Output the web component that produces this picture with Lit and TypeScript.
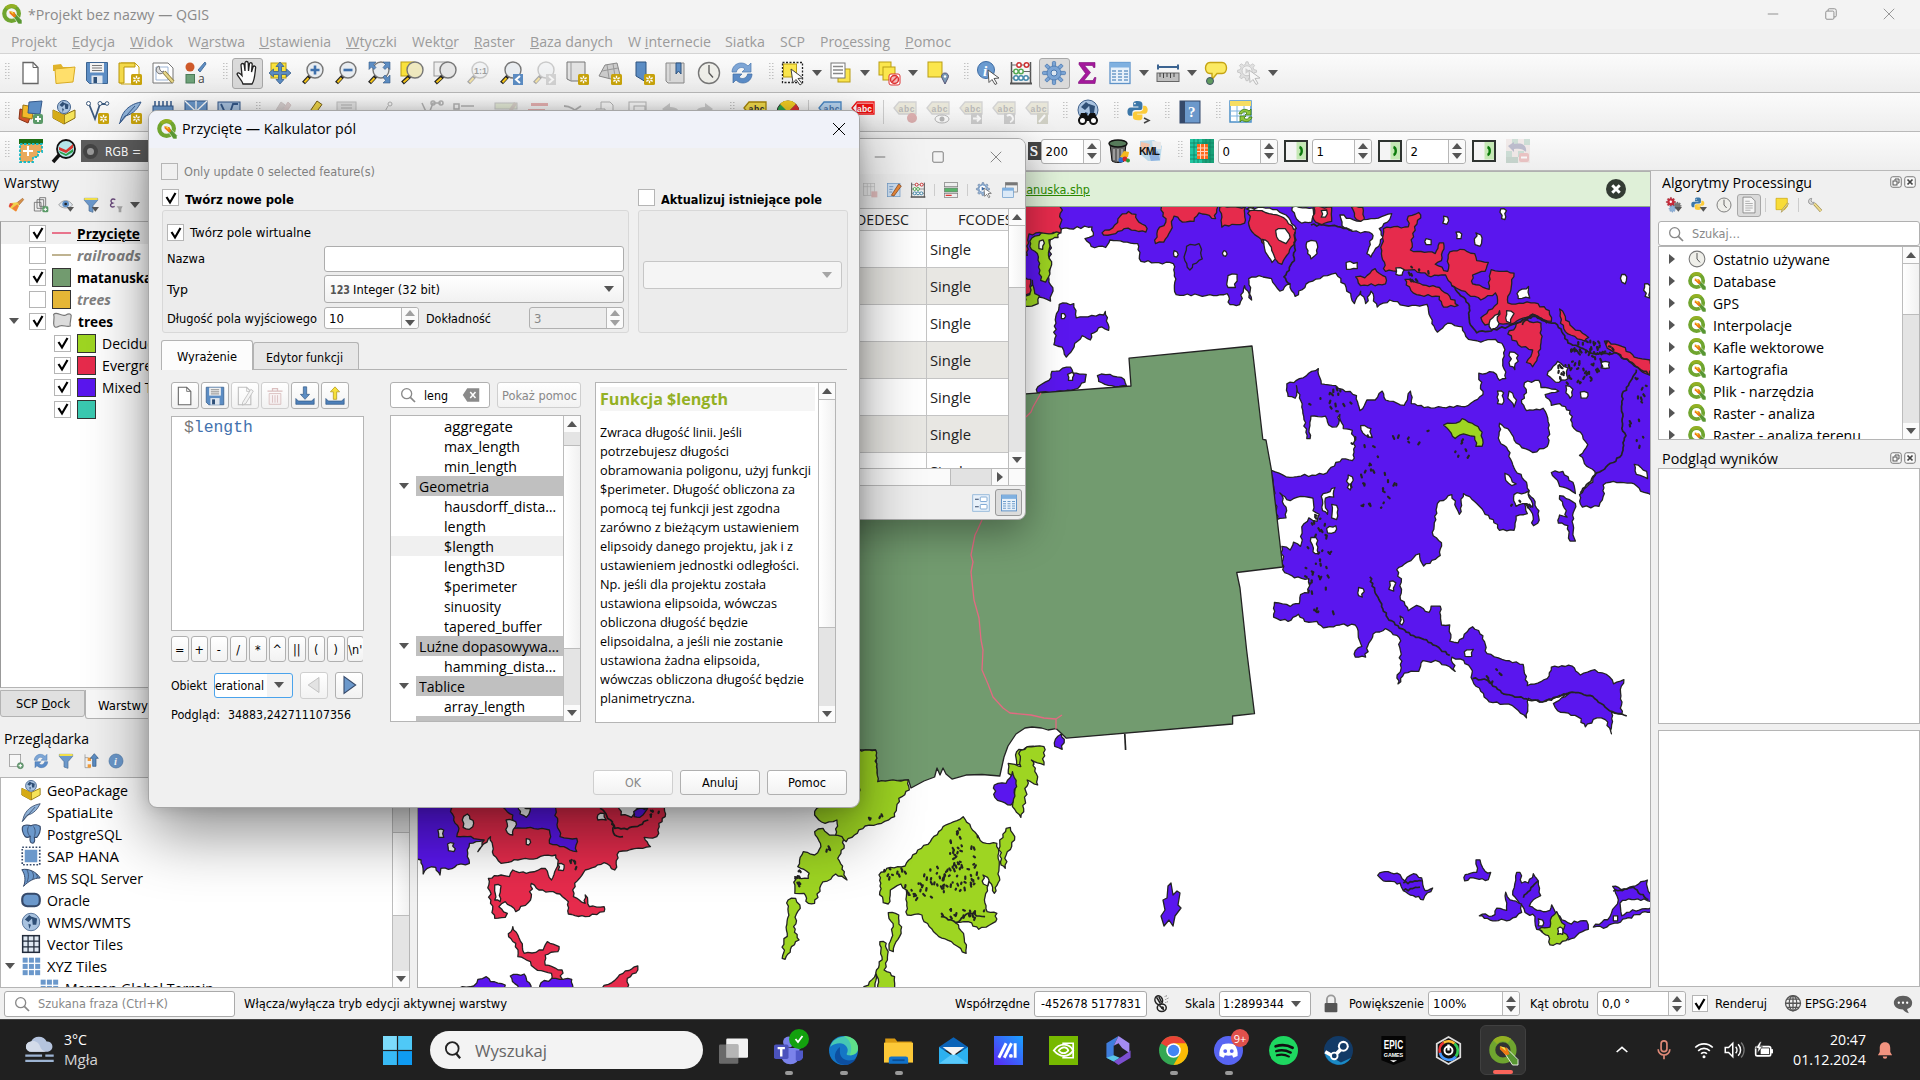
import { LitElement, html, svg, css, TemplateResult } from "lit";
import { customElement, property } from "lit/decorators.js";
import { classMap } from "lit/directives/class-map.js";

/* ---------- icons (24 x 24 grid) ---------- */
const badge = svg`<rect x="13" y="13" width="11" height="11" rx="1.500" fill="#c9a40c"/><path d="M18.500 14.800v7.400M15.300 16.700l6.400 3.600M21.700 16.700l-6.400 3.600" stroke="#fff" stroke-width="1.400"/><circle cx="18.500" cy="18.500" r="1.200" fill="#c9a40c"/>`;
const glass = (fill = "#e9edf1", cx = 14) => svg`<path d="M${cx - 5} 15L2.500 22" stroke="#222" stroke-width="4"/><path d="M${cx - 6.500} 17L3.500 21.300" stroke="#f5c518" stroke-width="2"/><circle cx="${cx}" cy="9" r="8" fill="${fill}" stroke="#777" stroke-width="1.400"/>`;
const sheet = (x = 4) => svg`<path d="M${x} 1.500h10l5 5v16h-15z" fill="#fff" stroke="#666" stroke-width="1.300"/><path d="M${x + 10} 1.500v5h5" fill="none" stroke="#666"/>`;
const globe = (cx: number, cy: number, r: number) => svg`<circle cx="${cx}" cy="${cy}" r="${r}" fill="#a9c3e0" stroke="#41628c"/><path d="M${cx - r * 0.7} ${cy - r * 0.3}l${r * 0.5} ${-r * 0.5} ${r * 0.4} ${r * 0.3} ${-r * 0.5} ${r * 0.5}zM${cx + r * 0.1} ${cy - r * 0.6}l${r * 0.6} ${r * 0.2} ${-r * 0.1} ${r * 0.7} ${-r * 0.4} 0zM${cx - r * 0.3} ${cy + r * 0.2}l${r * 0.3} ${r * 0.1} ${-r * 0.2} ${r * 0.5}z" fill="#2f4f76"/>`;
const abc = (bg: string, bd: string, tx: string) => svg`<path d="M1 8l5-6h17v12h-17z" fill="${bg}" stroke="${bd}" stroke-width="1.300"/><text x="5.500" y="11.500" font-size="8.500" font-weight="700" font-family="Liberation Sans" fill="${tx}" textLength="16">abc</text>`;
const cursor = svg`<path d="M12 9l11 8-5 .5 3 5-2 1-3-5-3 3z" fill="#fff" stroke="#555"/>`;
const gearPath = "M12 1l1.500 0 .8 3.200 2.300 1 2.800-1.800 2 2-1.800 2.800 1 2.300 3.200.8v2.400l-3.200.8-1 2.300 1.800 2.800-2 2-2.800-1.800-2.300 1-.8 3.200h-2.500l-.8-3.200-2.300-1-2.800 1.800-2-2 1.800-2.800-1-2.300-3.200-.8v-2.400l3.200-.8 1-2.300-1.800-2.800 2-2 2.800 1.800 2.300-1 .8-3.200z";
const tiles = (fill: string) => [2, 9.500, 17].map((x) => [2, 9.500, 17].map((y) => svg`<rect x="${x}" y="${y}" width="6" height="6" fill="${fill}"/>`));
const snake = svg`<path d="M12 1c-4 0-5 1-5 3.500v3h6v1H4.500c-3 0-4 2-4 5s1.500 4.500 3.500 4.500h2v-3c0-2 1-3.500 3.500-3.500h5c2 0 3-1 3-3v-4c0-2.500-2-3.500-5.500-3.500z" fill="#3c77a8"/><path d="M12.500 23c4 0 5-1 5-3.500v-3h-6v-1h8.500c2.500 0 3.500-2 3.500-4.500s-1.300-4.500-3.500-4.500h-1.700v3c0 2-1.300 3.500-3.500 3.500h-5c-2 0-3 1-3 3v4c0 2 2 3 5.700 3z" fill="#fccb3a"/><circle cx="9" cy="4" r="1" fill="#fff"/>`;
const refresh = svg`<path d="M2 11c0-5 4-9 9-9 3 0 5 1 7 3l3-3v9h-9l3-3c-2-2-5-2-7 0-1 1-1.500 2-1.500 3z" fill="#7ea6d6" stroke="#4a78b0" stroke-width=".7"/><path d="M22 13c0 5-4 9-9 9-3 0-5-1-7-3l-3 3v-9h9l-3 3c2 2 5 2 7 0 1-1 1.500-2 1.500-3z" fill="#5b8cc8" stroke="#3f6da5" stroke-width=".7"/>`;
const funnel = svg`<path d="M2 2h20v3l-7 8v10l-6-2v-8l-7-8z" fill="#6b98cb" stroke="#4b6d92"/><rect x="2" y="1.500" width="20" height="3" fill="#f2e04a"/>`;
const menuArrow = svg`<path d="M13 15h11l-5.500 7z" fill="#555"/>`;
const search = svg`<circle cx="10" cy="10" r="7.500" fill="none" stroke="#888" stroke-width="2"/><path d="M15.500 15.500l7 7" stroke="#888" stroke-width="2.600"/>`;
const disk = svg`<path d="M1.500 1.500h21v21h-18l-3-3z" fill="#5c8dc4" stroke="#3c6491"/><rect x="5" y="2" width="14" height="9.500" fill="#f2f2f2"/><path d="M7 4.500h10M7 7h10M7 9.500h10" stroke="#777"/><rect x="6.500" y="14.500" width="11" height="8" fill="#dfe6ee"/><rect x="8.500" y="16" width="3.500" height="6" fill="#2e5078"/>`;
const table = svg`<rect x="2" y="1.500" width="20" height="21" fill="#e8f1fa" stroke="#5f93c8" stroke-width="1.300"/><rect x="2" y="1.500" width="20" height="5" fill="#7fb0e0"/><path d="M4 10h4M10 10h4M16 10h4M4 13h4M10 13h4M16 13h4M4 16h4M10 16h4M16 16h4M4 19h4M10 19h4M16 19h4" stroke="#6c9ac8" stroke-width="1.300"/>`;
const abacus = svg`<path d="M2.500 1v22M21.500 1v22" stroke="#555" stroke-width="1.500"/><path d="M1 22.500h22" stroke="#555" stroke-width="2"/><path d="M2 4h20M2 10.500h20M2 17h20" stroke="#666"/><g fill="#fff" stroke-width="1.500"><g stroke="#c33"><circle cx="10" cy="4" r="2.200"/><circle cx="17.500" cy="4" r="2.200"/></g><g stroke="#5a5"><circle cx="7" cy="10.500" r="2.200"/><circle cx="12" cy="10.500" r="2.200"/></g><g stroke="#48a"><circle cx="7" cy="17" r="2.200"/><circle cx="12" cy="17" r="2.200"/><circle cx="17" cy="17" r="2.200"/></g></g>`;
const cog = [0, 45, 90, 135, 180, 225, 270, 315].map((a) => svg`<rect x="10.400" y="0.500" width="3.200" height="6" rx="1" transform="rotate(${a} 12 12)" fill="#7ba4d4" stroke="#4a78b0" stroke-width=".8"/>`);

const ICONS: Record<string, unknown> = {
  qgis: svg`<circle cx="11.500" cy="11.500" r="8.800" fill="none" stroke="#6fa52f" stroke-width="5"/><path d="M5 5a9 9 0 0 1 12-1" fill="none" stroke="#93b023" stroke-width="4.500"/><path d="M11.500 12l3-2 9.500 9.500v4.500h-4.500z" fill="#589632" stroke="#fff" stroke-width=".7"/><path d="M9 8.500l6 1.500 2 5-3 1-5-5z" fill="#ee7913"/><path d="M9 8.500l4 1 1 3z" fill="#f0e64a"/>`,
  new: sheet(4),
  open: svg`<path d="M1 4l8-1 2 3h9v4H1z" fill="#e0b32a"/><path d="M3 8l20-2-2 15-17 1.500z" fill="#ffdf6b" stroke="#d8ab23"/>`,
  save: disk,
  newLayout: svg`<path d="M3 2h14l4 4v17H3z" fill="#fff" stroke="#c9a40c"/><path d="M1 2h16v4H6v16H1z" fill="#f3d94a" stroke="#b8950b"/>${badge}`,
  layouts: svg`<path d="M2 2h15l5 5v15H2z" fill="#fff" stroke="#777"/><path d="M5 6h12v13H5z" fill="none" stroke="#9db5d6"/><path d="M8 5a4 4 0 1 0 5 5l-2 1-2-2z" fill="#ddd" stroke="#777"/><path d="M13 11l9 10" stroke="#8a7a3b" stroke-width="4"/><path d="M13 11l9 10" stroke="#e8d78a" stroke-width="2.400"/>`,
  style: svg`<circle cx="6" cy="6" r="4.500" fill="#cf5a2a"/><path d="M14 9l7-8 1 2-6 8z" fill="#5f8fc5" stroke="#47719f"/><rect x="2" y="13.500" width="8.500" height="8.500" fill="#6fa37a" stroke="#4c7c58"/><text x="14" y="22" font-size="12" font-family="Open Sans" fill="#444">a</text>`,
  hand: svg`<path d="M8 23c-1-4-5-7-6-10 1-2 3-1 5 1.500L6 4c0-2 3-2 3.200 0l.8 6V2c0-2 3-2 3.200 0l.3 8 .9-7c.3-2 3-1.500 2.800.4L16.500 11l1.500-5c.6-1.700 3-1 2.600.8C20 11 20 19 17 23z" fill="#fff" stroke="#222" stroke-width="1.300"/>`,
  panSel: svg`<rect x="3" y="2" width="15" height="15" fill="#f9e23c" stroke="#b99d15"/><path d="M12 1l4 4.500h-2.500v5h5V8l4.500 4-4.500 4v-2.500h-5v5H16L12 23l-4-4.500h2.500v-5h-5V16L1 12l4.500-4v2.500h5v-5H8z" fill="#5c8dc4" stroke="#3b618d" stroke-width=".8"/>`,
  zoomIn: svg`${glass()}<path d="M14 4.500v9M9.500 9h9" stroke="#3f71ad" stroke-width="2.600"/>`,
  zoomOut: svg`${glass()}<path d="M9.500 9h9" stroke="#3f71ad" stroke-width="2.600"/>`,
  zoomFull: svg`${glass()}<path d="M2 1h7L6.500 3.500 9 6.500 7 8.500 4.500 6 2 8.500zM23 1h-7l2.500 2.500L16 6.500l2 2L20.500 6 23 8.500zM23 22h-7l2.500-2.500L16 16l2-2 2.500 2.500L23 14z" fill="#5c8dc4" stroke="#355b88" stroke-width=".6"/>`,
  zoomSel: svg`<rect x="1" y="1" width="13" height="14" fill="#f9e23c" stroke="#b99d15"/>${glass("#efe9bf", 15)}`,
  zoomLayer: svg`<rect x="1" y="1" width="13" height="14" fill="#eee" stroke="#999"/>${glass("#e6e6e6", 15)}`,
  zoom1: svg`<g opacity=".35">${glass()}<text x="8" y="12.500" font-size="9" font-weight="700" font-family="Liberation Sans">1:1</text></g>`,
  zoomLast: svg`${glass()}<rect x="14" y="13" width="10" height="11" fill="#5c8dc4"/><path d="M21 15l-4 3.500 4 3.500" fill="none" stroke="#fff" stroke-width="2"/>`,
  zoomNext: svg`<g opacity=".35">${glass()}<rect x="14" y="13" width="10" height="11" fill="#999"/><path d="M17 15l4 3.500-4 3.500" fill="none" stroke="#fff" stroke-width="2"/></g>`,
  mapView: svg`<path d="M2 1h18v19H6l-4-2z" fill="#e2e2e2" stroke="#777"/><path d="M6 1v19" stroke="#999"/>${badge}`,
  view3d: svg`<path d="M1 15l6-11 12-2 3 12-9 4z" fill="#ccc" stroke="#888"/><path d="M4 10l16-3M9 4l2 13M15 3l2 12" stroke="#999" fill="none"/>${badge}`,
  bookNew: svg`<path d="M5 1h10v20l-5-3-5-3z" fill="#5c8dc4" stroke="#2f5480"/>${badge}`,
  book: svg`<path d="M2 2h18v20H4l-2-2z" fill="#dadada" stroke="#888"/><path d="M6 2v18" stroke="#aaa"/><path d="M12 2h5v11l-2.500-3-2.500 3z" fill="#5c8dc4" stroke="#2f5480"/>`,
  clock: svg`<circle cx="12" cy="12" r="10.500" fill="#efefea" stroke="#777" stroke-width="1.400"/><path d="M12 4v8l4 4.500" fill="none" stroke="#555" stroke-width="1.300"/>`,
  refresh,
  select: svg`<rect x="1.500" y="1.500" width="20" height="20" fill="none" stroke="#222" stroke-dasharray="2 1.500" stroke-width="1.300"/><rect x="2.500" y="3" width="13" height="13" fill="#fbe64d" stroke="#b99d15"/><path d="M10 8l12 9-5 .5 4 5-2 1.500-4-5.500-3 3.500z" fill="#fff" stroke="#444"/>`,
  selForm: svg`<rect x="9" y="8" width="12" height="13" fill="#fbe64d" stroke="#b99d15"/><rect x="2" y="2" width="14" height="15" fill="#fff" stroke="#777"/><path d="M4 5.500h10M4 9h10M4 12.500h10" stroke="#888" stroke-width="1.500"/>`,
  deselect: svg`<rect x="2" y="1" width="12" height="13" fill="#fbe64d" stroke="#b99d15"/><rect x="6" y="6" width="12" height="13" fill="#fbe64d" stroke="#b99d15"/><rect x="12" y="13" width="11" height="11" rx="2" fill="#fff" stroke="#d33"/><circle cx="17.500" cy="18.500" r="4" fill="#f3b8b8" stroke="#d33" stroke-width="1.500"/><path d="M15 21l5-5" stroke="#d33" stroke-width="1.500"/>`,
  selLoc: svg`<rect x="3" y="1" width="14" height="15" fill="#fbe64d" stroke="#b99d15"/><path d="M20 12a3.300 3.300 0 0 1 3 5l-3 6-3-6a3.300 3.300 0 0 1 3-5z" fill="#7a9ab5" stroke="#557"/><circle cx="20" cy="15.500" r="1.200" fill="#fff"/>`,
  info: svg`<circle cx="10" cy="9" r="8.500" fill="#6b9bd0" stroke="#3f6da5"/><text x="7" y="15" font-size="15" font-style="italic" font-weight="700" font-family="Liberation Serif" fill="#fff">i</text>${cursor}`,
  abacus,
  gear: svg`${cog}<circle cx="12" cy="12" r="7" fill="#7ba4d4" stroke="#4a78b0" stroke-width=".8"/><circle cx="12" cy="12" r="3" fill="#dde6f0" stroke="#4a78b0"/>`,
  sigma: svg`<path d="M4 1.500h16v5h-1.500l-1-2H9.500l6 7-6.500 8h9l1.500-3H21l-1 6H3.500v-1.500l7-8.500-6.500-9z" fill="#a4189c" stroke="#7b0e75" stroke-width=".6"/>`,
  table,
  ruler: svg`<path d="M2 6h20M2 3.500v5M22 3.500v5" stroke="#3c6491" stroke-width="2"/><rect x="1" y="12" width="22" height="8.500" fill="#bfbfbf" stroke="#666"/><path d="M4 12v4M7.500 12v5M11 12v4M14.500 12v5M18 12v4" stroke="#444"/>`,
  tip: svg`<path d="M6 1.500h12c6 0 6 11 0 11h-5l-5 6v-6H6c-6 0-6-11 0-11z" fill="#fbea63" stroke="#c5a414" stroke-width="1.400"/><circle cx="6" cy="20" r="3.500" fill="#5f9a5f" stroke="#456"/>`,
  gearGray: svg`<g opacity=".35"><path d="${gearPath}" transform="scale(.82)" fill="#bbb" stroke="#666"/><circle cx="10" cy="9.800" r="5" fill="#eee" stroke="#777"/><path d="M8.500 7l4 3-4 3z" fill="#888"/>${cursor}</g>`,
  dsm: svg`<path d="M1 9l12 3-4 11L0 19z" fill="#d0532a" stroke="#8a3214"/><path d="M4 5l11 2-2 12-10-2z" fill="#f2b92b" stroke="#9b7414"/><path d="M10 2l13-1-2 13-12-1z" fill="#5c8dc4" stroke="#35598a"/><rect x="14" y="14" width="10" height="10" rx="2" fill="#5b9a68"/><path d="M19 16v6M16 19h6" stroke="#fff" stroke-width="1.800"/>`,
  gpkg: svg`<path d="M1 10l11 5v9L1 18zM12 15l11-5v8l-11 6z" fill="#f5e35a" stroke="#8a6d0b"/><path d="M1 10l11 5v9L1 18z" fill="#d5ab16"/>${globe(12, 7, 6.500)}`,
  shpNew: svg`<path d="M4 4l6 15 5-15h7" fill="none" stroke="#3d5a7d" stroke-width="1.800"/><g fill="#fff" stroke="#3d5a7d"><circle cx="3.500" cy="3.500" r="2"/><circle cx="15" cy="3.500" r="2"/><circle cx="22" cy="3.500" r="1.800"/></g>${badge}`,
  featherNew: svg`<path d="M2 23c1-8 6-18 21-21-3 6-7 12-16 14z" fill="#8fb2d8" stroke="#35598a"/><path d="M1 24L17 6" stroke="#35598a"/>${badge}`,
  chip: svg`<path d="M4 1v5M8 1v5M12 1v5M16 1v5M20 1v5" stroke="#35598a" stroke-width="1.500"/><rect x="2" y="6" width="20" height="14" fill="#6b98cb" stroke="#35598a"/>`,
  meshNew: svg`<rect x="1" y="1" width="22" height="21" fill="#6b98cb" stroke="#35598a"/><path d="M1 1l22 21M23 1L1 22M12 1v21" stroke="#fff" stroke-width="1.300"/>`,
  virt: svg`<rect x="1" y="2" width="22" height="20" fill="#a9c3e0" stroke="#35598a"/><path d="M4 4l7 15 5-15h5" fill="none" stroke="#35598a" stroke-width="1.800"/>`,
  pencils: svg`<g opacity=".4"><path d="M8 20L20 2l3 3L12 22z" fill="#b99" stroke="#a88"/><path d="M2 20L13 2l4 3L6 22z" fill="#a99" stroke="#988"/></g>`,
  pencil: svg`<path d="M3 20L16 1l5 3.500L8 22l-5 2z" fill="#f0d64a" stroke="#776019"/>`,
  saveGray: svg`<g opacity=".4"><rect x="3" y="2" width="19" height="20" fill="#ccc" stroke="#777"/><path d="M7 5h11M7 8h11" stroke="#777" stroke-width="1.500"/></g>`,
  vtx: svg`<g opacity=".4"><circle cx="14" cy="4" r="2" fill="#fff" stroke="#555"/><path d="M12 6l-5 9" stroke="#555"/></g>`,
  vtx2: svg`<g opacity=".4" fill="none" stroke="#555" stroke-width="1.500"><path d="M3 3l6 13 5-13h8"/><circle cx="14" cy="3" r="2"/><circle cx="22" cy="3" r="2"/></g>`,
  form: svg`<g opacity=".4" stroke="#555" fill="none" stroke-width="1.500"><rect x="2" y="4" width="5" height="5"/><path d="M9 6h13"/></g>`,
  redbar: svg`<g opacity=".35"><rect x="4" y="3" width="17" height="3" fill="#c33"/><rect x="1" y="9" width="17" height="3" fill="#c33"/></g>`,
  barpen: svg`<g opacity=".4"><rect x="1" y="3" width="22" height="6" fill="#cda" stroke="#888"/><path d="M12 14L20 2l3 2-8 12z" fill="#a98"/></g>`,
  cut: svg`<g opacity=".4" stroke="#555" stroke-width="1.800" fill="none"><path d="M4 6c6 0 12 4 14 8M21 6l-12 8"/></g>`,
  copy: svg`<g opacity=".4" stroke="#555" fill="#fff"><path d="M8 2h9l3 3v9H8z"/><path d="M3 9h9v9H3z"/></g>`,
  paste: svg`<g opacity=".4" stroke="#555" fill="#fff"><rect x="3" y="2" width="17" height="18"/><rect x="8" y="6" width="11" height="12"/></g>`,
  undo: svg`<path d="M3 9l8-6v4c8 0 10 4 10 9-2-3-4-4-10-4v4z" fill="#ccc"/>`,
  redo: svg`<path d="M21 9l-8-6v4c-8 0-10 4-10 9 2-3 4-4 10-4v4z" fill="#ccc"/>`,
  abcY: abc("#f4dd4c", "#a8870a", "#333"),
  pie: svg`<circle cx="12" cy="12" r="11" fill="#2fa84f" stroke="#333"/><path d="M12 12L4 4a11 11 0 0 1 16 0z" fill="#f5cf25"/><path d="M12 12l8-8a11 11 0 0 1 2 12z" fill="#d33"/>`,
  abcB: abc("#b9d6f2", "#4a88c5", "#4a78b0"),
  abcR: svg`<path d="M1 8l5-6h17v12h-17z" fill="#fff" stroke="#e11" stroke-width="1.300"/><rect x="5.500" y="3.500" width="16.500" height="9.500" fill="#e11"/><text x="6" y="11.500" font-size="8.500" font-weight="700" font-family="Liberation Sans" fill="#fff" textLength="15">abc</text>`,
  lab1: svg`<g opacity=".32">${abc("#c9c39a", "#888", "#333")}<circle cx="19" cy="18" r="5" fill="#a22"/></g>`,
  lab2: svg`<g opacity=".32">${abc("#c9c39a", "#888", "#333")}<ellipse cx="16" cy="19" rx="7" ry="4" fill="#fff" stroke="#333"/><circle cx="16" cy="19" r="2.500" fill="#333"/></g>`,
  lab3: svg`<g opacity=".32">${abc("#c9c39a", "#888", "#333")}<rect x="12" y="13" width="11" height="11" fill="#777"/><path d="M14 18.500h6M18 15.500l3 3-3 3" stroke="#fff" fill="none" stroke-width="2"/></g>`,
  lab4: svg`<g opacity=".32">${abc("#c9c39a", "#888", "#333")}<rect x="12" y="13" width="11" height="11" fill="#777"/><path d="M15 16a3.500 3.500 0 1 1 3 6" stroke="#fff" fill="none" stroke-width="2"/></g>`,
  lab5: svg`<g opacity=".32">${abc("#c9c39a", "#888", "#333")}<rect x="12" y="13" width="11" height="11" fill="#886"/><path d="M14 22l6-7" stroke="#fff" stroke-width="2"/></g>`,
  metaSearch: svg`${globe(12, 10, 10)}<path d="M5 13h5l2 3 2-3h5l3 8h-20z" fill="#111"/><circle cx="6.500" cy="20.500" r="3.500" fill="#fff" stroke="#111" stroke-width="2"/><circle cx="17.500" cy="20.500" r="3.500" fill="#fff" stroke="#111" stroke-width="2"/>`,
  python: svg`<g transform="scale(.88)">${snake}</g><path d="M17 18l5 2.500-5 2.500" fill="none" stroke="#444" stroke-width="1.500"/>`,
  help: svg`<rect x="2" y="1" width="20" height="22" fill="#6b98cb" stroke="#35496a"/><rect x="2" y="1" width="5" height="22" fill="#35496a"/><text x="10" y="17" font-size="15" font-family="Liberation Serif" font-weight="700" fill="#fff">?</text>`,
  tabRef: svg`<rect x="1" y="1" width="21" height="21" fill="#fff" stroke="#4c90c8" stroke-width="1.500"/><rect x="1" y="1" width="21" height="5" fill="#f6dd63"/><path d="M1 11h21M1 16h21M8 6v16M15 6v16" stroke="#7db3de"/><path d="M10 14c1-5 7-6 10-3l2-2v6h-6l2-2c-2-2-5-1-5 1zM23 17c-1 5-7 6-10 3l-2 2v-6h6l-2 2c2 2 5 1 5-1z" fill="#8fc63d" stroke="#3a7a14" stroke-width=".8"/>`,
  scp1: svg`<rect x="0" y="0" width="24" height="5" fill="#1c6e14"/><path d="M1 5h22v8h-4v5h-5v5H1z" fill="#e9a95c" stroke="#17b8c4" stroke-width="1.800" stroke-dasharray="2.500 1.500"/><path d="M9 7v10M4 12h10" stroke="#fff" stroke-width="2"/>`,
  scp2: svg`<path d="M8 15L1 23" stroke="#111" stroke-width="3.500"/><circle cx="14" cy="10" r="9" fill="#b5e5ea" stroke="#111" stroke-width="1.800"/><path d="M7 8l7 3 7-6v4l-7 5-7-3z" fill="#d8362e"/><path d="M7 12l7 3 7-5v3l-7 4-6-3z" fill="#2b9e4c"/>`,
  trash: svg`<path d="M4 5l2 17c3 2 9 2 12 0l2-17z" fill="#666" stroke="#111"/><path d="M8 10v11M12 10v12M16 10v11" stroke="#bbb" stroke-width="1.300"/><ellipse cx="12" cy="4.500" rx="9" ry="3.500" fill="#567a5a" stroke="#111" stroke-width="1.500"/><path d="M14 18l4-6 5 1-1 5z" fill="#f5b91e"/><circle cx="15" cy="21" r="2.500" fill="#2a6fd6"/><circle cx="19" cy="20" r="2.500" fill="#d42a2a"/><circle cx="22" cy="21.500" r="2" fill="#2a9a3a"/>`,
  kml: svg`<path d="M1 2l14-1 8 6-2 15H9L1 15z" fill="#bcd9ea"/><path d="M2 3l9 2-4 9-6-2z" fill="#f3c1a8"/><path d="M10 15l9-3 2 9-9 1z" fill="#8fb1e0"/><path d="M13 2l9 1v7h-8z" fill="#e8e8e8"/><text x="0" y="16" font-size="10.500" font-weight="700" font-family="Liberation Sans" fill="#111" textLength="21">KML</text>`,
  pix: svg`<rect width="24" height="24" fill="#18a078"/><rect width="12" height="24" fill="#20c4a0"/><path d="M0 4h24M0 8h24M0 16h24M0 20h24M4 0v24M8 0v24M16 0v24M20 0v24" stroke="#0f8060" stroke-width=".8"/><rect x="7" y="5" width="11" height="15" fill="#ff6a1c"/><path d="M7 9h11M7 12.500h11M7 16h11M10.500 5v15M14.500 5v15" stroke="#ffd5bd"/>`,
  go: svg`<rect x="1" y="2" width="22" height="20" fill="#f4f4f4" stroke="#2e3330" stroke-width="2"/><rect x="12.500" y="3" width="9.500" height="17.500" fill="#c5e8b5"/><path d="M15.500 8c3 1 3 7 0 8" fill="none" stroke="#0b7a0b" stroke-width="2.400"/>`,
  undoPix: svg`<g opacity=".45"><rect width="24" height="24" fill="#e8d9d6"/><path d="M6 0h6v6H6zM18 0h6v6h-6zM0 12h6v6H0zM12 12h6v6h-6z" fill="#9bc0ae"/><path d="M0 18h12v6H0z" fill="#8fae9e"/><path d="M2 7l6-4v2c9-2 13 2 12 8-3-3-6-4-12-3v3z" fill="#77779b"/><rect x="13" y="14" width="10" height="9" rx="2" fill="#d88"/><path d="M15 18.500h6" stroke="#fff" stroke-width="2"/></g>`,
  brush: svg`<path d="M13 9L22 2l1.500 2-7 8z" fill="#d9924a" stroke="#a4652a"/><path d="M4 9l10-1 3 4-4 9c-4 0-8-3-11-6z" fill="#f1d24b"/><path d="M3 9l5 1-5 6-2-2z" fill="#e34b3c"/><path d="M6 17l8-6 2 3-4 8z" fill="#f0803a"/>`,
  group: svg`<path d="M2 8h10v13H2zM6 4h10v13H6zM10 1h9v13h-9z" fill="#eee" stroke="#666" stroke-width="1.200"/><rect x="14" y="14" width="9" height="9" rx="2" fill="#5b9a68"/><path d="M18.500 16v5M16 18.500h5" stroke="#fff" stroke-width="1.500"/>`,
  eye: svg`<path d="M1 12c6-9 15-9 21 0-6 6-15 6-21 0z" fill="#dce4ec" stroke="#888"/><circle cx="11.500" cy="10.500" r="5" fill="#5c8dc4"/><circle cx="11.500" cy="10.500" r="2" fill="#222"/>${menuArrow}`,
  funnelM: svg`${funnel}${menuArrow}`,
  funnel,
  eps: svg`<path d="M11 4c-6-3-9 3-4 5-6 2-3 8 3 5" fill="none" stroke="#6a4a7c" stroke-width="2"/><path d="M13 14h9l-2 4v5h-4v-5z" fill="#aaa"/>`,
  tools: svg`<g transform="scale(.6)"><path d="${gearPath}" fill="#c92c3c" stroke="#8a1522"/><circle cx="12" cy="12" r="3" fill="#fff"/></g><g transform="translate(11 7) scale(.5)"><path d="${gearPath}" fill="#777" stroke="#555"/></g><g transform="translate(4 12) scale(.45)"><path d="${gearPath}" fill="#8fb2d8" stroke="#4a78b0"/></g>${menuArrow}`,
  pyM: svg`<g transform="scale(.85)">${snake}</g>${menuArrow}`,
  doc: svg`<path d="M4 1.500h11l5 5v16H4z" fill="#f5f5f5" stroke="#777"/><path d="M7 7h6M7 10h10M7 13h10M7 16h10M7 19h7" stroke="#999"/>`,
  note: svg`<path d="M3 2h17v12l-4 5H3z" fill="#f8dc38" stroke="#c9a40c"/><path d="M22 10L13 21l-2 2 1-4 8-10z" fill="#e9dd9c" stroke="#a08c42"/>`,
  wrench: svg`<path d="M7 2a4.500 4.500 0 1 0 4 6l-3 0-2-2z" fill="#ddd" stroke="#777"/><path d="M11 10l10 11" stroke="#8a7a3b" stroke-width="4.500"/><path d="M11 10l10 11" stroke="#ecd98c" stroke-width="3"/>`,
  search,
  addSel: svg`<rect x="2" y="2" width="17" height="18" fill="#f7f7f7" stroke="#888"/><circle cx="18.500" cy="19" r="4.500" fill="#6fa37a" stroke="#4c7c58"/><path d="M18.500 16.500v5M16 19h5" stroke="#fff" stroke-width="1.500"/>`,
  collUp: svg`<path d="M3 2v20h8M3 7h5" stroke="#888" fill="none"/><rect x="7" y="7" width="5" height="5" fill="#f19c38"/><rect x="7" y="17" width="5" height="5" fill="#f19c38"/><path d="M17 1l6 7h-3.500v12h-5V8H11z" fill="#5c8dc4" stroke="#2f5480"/>`,
  infoB: svg`<circle cx="12" cy="12" r="10.500" fill="#6b98cb" stroke="#4e79a8"/><text x="9" y="18" font-size="16" font-style="italic" font-weight="700" font-family="Liberation Serif" fill="#fff">i</text>`,
  feather: svg`<path d="M2 23c1-8 6-18 21-21-3 6-7 12-16 14z" fill="#8fb2d8" stroke="#35496a"/><path d="M1 24L17 6" stroke="#35496a"/>`,
  pg: svg`<path d="M3 2c5-2 7 0 9 0 4-2 9-1 11 1 1 4-1 10-4 13l-3 0c1 4 0 7-2 7s-4-1-3-8c-2 1-4 2-6 0C2 12 0 4 3 2z" fill="#6b98cb" stroke="#35496a" stroke-width="1.300"/><path d="M9 3c-2 4-1 9 2 12M15 3c3 4 2 9 1 12" fill="none" stroke="#35496a"/>`,
  hana: svg`<rect x="4.500" y="4.500" width="15" height="15" fill="#6b98cb"/><rect x="1.500" y="1.500" width="21" height="21" fill="none" stroke="#35496a" stroke-width="2" stroke-dasharray="2 2"/>`,
  mssql: svg`<path d="M1 2c8-2 18 3 22 10-8 0-14 4-20 10 3-7 2-14-2-20z" fill="#6b98cb" stroke="#35496a" stroke-width="1.200"/><path d="M7 2c3 5 2 11 0 15M13 4c3 4 2 7 1 10M18 7c2 3 2 4 1 5" fill="none" stroke="#35496a"/>`,
  oracle: svg`<rect x="1.500" y="4.500" width="21" height="15" rx="6" fill="#6b98cb" stroke="#35496a" stroke-width="2.600"/>`,
  wms: globe(12, 12, 10.500),
  vt: svg`<rect x="2" y="2" width="20" height="20" fill="#dfe8f2" stroke="#222c3c" stroke-width="1.800"/><path d="M2 8.500h20M2 15.500h20M8.500 2v20M15.500 2v20" stroke="#222c3c" stroke-width="1.500"/>`,
  xyz: svg`${tiles("#6b98cb")}`,
  poly: svg`<path d="M2 4c4-4 9 3 14 1 4-2 6-2 7 0 0 5-2 9-1 13-4 2-9-2-13 0-5 3-7 1-7-3s1-8 0-11z" fill="#dcdcdc" stroke="#777" stroke-width="1.400"/>`,
  editG: svg`<g opacity=".4">${sheet(4)}<path d="M9 20L19 4l3 2-9 15-4 2z" fill="#eee" stroke="#666"/></g>`,
  binG: svg`<g opacity=".4" fill="#f6e8ea" stroke="#a66"><path d="M3 6h18M9 6V3h6v3" fill="none" stroke-width="1.500"/><path d="M5 9h14v13H5z"/><path d="M9 11v9M12 11v9M15 11v9"/></g>`,
  down: svg`<path d="M10 1h4v9h3.500L12 16 6.500 10H10z" fill="#5c8dc4" stroke="#2f5480" stroke-width=".8"/><path d="M1 15v7h22v-7l-3 3H4z" fill="#4d80ba" stroke="#2f5480" stroke-width=".8"/>`,
  up: svg`<path d="M10 16h4V7h3.500L12 1 6.500 7H10z" fill="#f7e13b" stroke="#a98d0d" stroke-width=".8"/><path d="M1 15v7h22v-7l-3 3H4z" fill="#4d80ba" stroke="#2f5480" stroke-width=".8"/>`,
  prev: svg`<path d="M18 3v18L5 12z" fill="#e3e3e3" stroke="#bbb"/>`,
  next: svg`<path d="M6 2v20L20 12z" fill="#6b98cb" stroke="#35496a" stroke-width="1.300"/>`,
  clear: svg`<path d="M7 3h16v18H7l-6-9z" fill="#8a8a8a"/><path d="M11 8l7 8M18 8l-7 8" stroke="#fff" stroke-width="2"/>`,
  colDel: svg`<g opacity=".35"><rect x="2" y="2" width="17" height="18" fill="#eee" stroke="#777"/><path d="M2 7h17M8 2v18M13 2v18" stroke="#777"/><rect x="14" y="14" width="9" height="9" fill="#c66"/></g>`,
  editT: svg`<rect x="2" y="2" width="19" height="20" fill="#cfe1f4" stroke="#6c9ac8"/><path d="M5 7h6M5 11h5M5 15h4" stroke="#4a78b0"/><path d="M8 20L19 3l4 3L12 21z" fill="#ea8a3a" stroke="#7a3a10"/>`,
  cond: svg`<rect x="2" y="1" width="20" height="6" fill="#eee" stroke="#777"/><rect x="2" y="9" width="20" height="6" fill="#58b56a" stroke="#777"/><rect x="2" y="17" width="20" height="6" fill="#eee" stroke="#777"/><path d="M4 20h9" stroke="#d33" stroke-width="2"/>`,
  action: svg`<path d="${gearPath}" transform="scale(.85)" fill="#9bb7d6" stroke="#58749a"/><circle cx="10" cy="10" r="5.500" fill="#fff" stroke="#4a78b0"/><path d="M8.500 7l5 3-5 3z" fill="#3a6aa8"/>${cursor}`,
  dock: svg`<rect x="5" y="1" width="18" height="14" fill="#eee" stroke="#777"/><rect x="5" y="1" width="18" height="4" fill="#777"/><rect x="1" y="9" width="16" height="14" fill="#dbe9f7" stroke="#5f93c8"/><rect x="1" y="9" width="16" height="4" fill="#7fb0e0"/>`,
  formV: svg`<rect x="1" y="1" width="22" height="22" fill="#e8f1fa" stroke="#7ea9d4"/><path d="M4 7h5M4 17h5" stroke="#35496a" stroke-width="1.500"/><rect x="11" y="4" width="9" height="6" rx="1" fill="#fff" stroke="#5f93c8"/><rect x="11" y="14" width="9" height="6" rx="1" fill="#fff" stroke="#5f93c8"/>`,
  extents: svg`<g fill="none" stroke="#222" stroke-width="2"><ellipse cx="9" cy="7" rx="5" ry="6" transform="rotate(-20 9 7)"/><ellipse cx="13" cy="17" rx="6" ry="5"/><path d="M6 3l5 8M9 2l4 8M10 14l6 6"/></g><circle cx="14" cy="17" r="2" fill="#222"/><path d="M17 2l3-1M18 6l4-2M18 10l3-1" stroke="#222" stroke-dasharray="1 1"/>`,
  lock: svg`<path d="M6.500 11V6a5.500 5.500 0 0 1 11 0v5" fill="none" stroke="#999" stroke-width="2.500"/><rect x="3.500" y="10.500" width="17" height="12.500" rx="1.500" fill="#555"/>`,
  crs: svg`<g fill="none" stroke="#555" stroke-width="1.700"><circle cx="12" cy="11" r="10"/><ellipse cx="12" cy="11" rx="5" ry="10"/><path d="M2 11h20M4 5.500h16M4 16.500h16M12 1v20"/></g>`,
  bubble: svg`<path d="M12 2c7 0 11 4 11 8.500 0 4-2 6-6 7.500 0 2 1 3 2 5-4-1-6-3-7-4.500C5 18.500 1 15 1 10.500S5 2 12 2z" fill="#5e5e5e"/><g fill="#fff"><circle cx="7" cy="10.500" r="1.400"/><circle cx="12" cy="10.500" r="1.400"/><circle cx="17" cy="10.500" r="1.400"/></g>`,
  xmark: svg`<path d="M3 3l18 18M21 3L3 21" stroke="currentColor" stroke-width="1.500" fill="none"/>`,
  minus: svg`<path d="M3 12h18" stroke="currentColor" stroke-width="1.600"/>`,
  square: svg`<rect x="3" y="3" width="18" height="18" rx="2" fill="none" stroke="currentColor" stroke-width="1.600"/>`,
  restore: svg`<rect x="3" y="7" width="14" height="14" rx="2" fill="none" stroke="currentColor" stroke-width="1.600"/><path d="M7 7V5a2 2 0 0 1 2-2h9a3 3 0 0 1 3 3v9a2 2 0 0 1-2 2h-2" fill="none" stroke="currentColor" stroke-width="1.600"/>`,
  float: svg`<rect x="1.500" y="1.500" width="21" height="21" rx="4" fill="#fafafa" stroke="#777" stroke-width="2"/><rect x="6" y="10" width="8" height="8" fill="none" stroke="#555" stroke-width="2"/><path d="M10 9V6h8v8h-3" fill="none" stroke="#555" stroke-width="2"/>`,
  closeD: svg`<rect x="1.500" y="1.500" width="21" height="21" rx="4" fill="#fafafa" stroke="#777" stroke-width="2"/><path d="M7 7l10 10M17 7L7 17" stroke="#444" stroke-width="3.500"/>`,
  closeMsg: svg`<circle cx="12" cy="12" r="12" fill="#333b33"/><path d="M7.500 7.500l9 9M16.500 7.500l-9 9" stroke="#fff" stroke-width="3.500"/>`,
  cloud: svg`<path d="M5.500 13a4 4 0 0 1 0-8 6.500 6 0 0 1 12 0 4 4 0 0 1 1 8z" fill="#b5c4de"/><path d="M5.500 13a4 4 0 0 1 0-8c3-1 6 1 7 4s4 4 6 4z" fill="#d3dbe9"/><path d="M1 16h13M16.500 16H23M1 20h22" stroke="#9db4d3" stroke-width="1.700"/>`,
  win: svg`<path d="M0 0h11.500v11.500H0z" fill="#7ddcfb"/><path d="M12.500 0H24v11.500H12.500z" fill="#4fc9f7"/><path d="M0 12.500h11.500V24H0z" fill="#38baf5"/><path d="M12.500 12.500H24V24H12.500z" fill="#0f9bf2"/>`,
  tview: svg`<rect x="6" y="2" width="18" height="16" rx="1" fill="#f2f2f2"/><rect x="0" y="7" width="16" height="16" rx="1" fill="#777" opacity=".85"/><rect x="6" y="7" width="10" height="11" fill="#b5b5b5"/>`,
  teams: svg`<circle cx="12" cy="5" r="4.500" fill="#7b83eb"/><circle cx="20" cy="8" r="3" fill="#5059c9"/><path d="M6 10h15v7a7 6 0 0 1-15 0z" fill="#7b83eb"/><path d="M18 12h6v6a4 4 0 0 1-6 2z" fill="#5059c9"/><rect x="0" y="7" width="12" height="12" rx="1.500" fill="#4b53bc"/><path d="M3 10h6M6 10v7" stroke="#fff" stroke-width="2"/>`,
  edge: svg`<circle cx="12" cy="12" r="12" fill="#1476c6"/><path d="M1 9C4-2 22-3 24 10c0 4-3 6-7 6-2 0-3-1-2-2 2-4-2-8-6-8-3 0-6 1-8 3z" fill="#45c8b4"/><path d="M12 0c7 0 12 4 12 10 0 4-3 6-7 6 2-3 3-12-5-16z" fill="#5fe08a"/><path d="M9 13c0 6 6 9 13 6-3 5-9 6-13 4-5-2-6-9 0-14z" fill="#0d4fa0"/>`,
  folder: svg`<path d="M1 2h8l2 2.500h12V8H1z" fill="#d99a12"/><path d="M0 5.500h24V22H0z" fill="#fcc838"/><path d="M4 19a2 2 0 0 1 2-2h12a2 2 0 0 1 2 2v4H4z" fill="#1272c9"/><path d="M7 20h10" stroke="#0b4f95" stroke-width="1.500"/>`,
  mail: svg`<path d="M0 9l12-8 12 8v3H0z" fill="#0a63b8"/><path d="M0 9l12 8 12-8v14H0z" fill="#2cb1f0"/><path d="M0 23l12-9 12 9z" fill="#58c9fb"/><path d="M3 9h18l-9 7z" fill="#f4f4f4"/>`,
  msi: svg`<defs><linearGradient id="m" x1="0" y1="1" x2="1" y2="0"><stop stop-color="#5a26f5"/><stop offset="1" stop-color="#19a3ff"/></linearGradient></defs><rect width="24" height="24" fill="url(#m)"/><path d="M4 18L10 6M8.500 18l6-12" stroke="#fff" stroke-width="2.400"/><path d="M17.500 6v12" stroke="#fff" stroke-width="2.400"/><circle cx="14" cy="16.500" r="1.600" fill="#fff"/>`,
  nv: svg`<rect width="24" height="24" fill="#76b900"/><path d="M4 12c5-7 13-6 16 0-4 6-11 6-16 0z" fill="none" stroke="#fff" stroke-width="1.600"/><path d="M8 12c3-4 7-3 8 0-2 3-6 3-8 0z" fill="none" stroke="#fff" stroke-width="1.400"/><path d="M11 6h9v12h-9" fill="none" stroke="#fff" stroke-width="1.400"/>`,
  m365: svg`<path d="M12 0L2 6v12l6 3V8z" fill="#3f7ddc"/><path d="M12 0l9 6v8l-6-4-3-4-4 2z" fill="#a38bf0"/><path d="M8 21l4 3 10-6v-6l-7 5z" fill="#7c4fd0"/><path d="M2 18l6 3 5-3-5-2z" fill="#5ac5e8"/>`,
  chrome: svg`<circle cx="12" cy="12" r="12" fill="#34a853"/><path d="M12 12L1.600 6A12 12 0 0 1 22.400 6z" fill="#ea4335"/><path d="M12 6h10.400A12 12 0 0 1 12 24l5.200-9z" fill="#fbbc05"/><circle cx="12" cy="12" r="6" fill="#fff"/><circle cx="12" cy="12" r="4.700" fill="#4285f4"/>`,
  discord: svg`<circle cx="12" cy="12" r="12" fill="#5865f2"/><path d="M7 7c3-1 7-1 10 0 2 3 3 6 2.500 9.500L16 18l-1-2c-2 .5-4 .5-6 0l-1 2-3.500-1.500C4 13 5 10 7 7z" fill="#fff"/><circle cx="9.300" cy="12.500" r="1.600" fill="#5865f2"/><circle cx="14.700" cy="12.500" r="1.600" fill="#5865f2"/>`,
  spotify: svg`<circle cx="12" cy="12" r="12" fill="#1ed760"/><g fill="none" stroke="#111" stroke-linecap="round"><path d="M5.500 8.500c5-1.500 10-1 14 1.200" stroke-width="2.300"/><path d="M6 12.500c4-1.200 8-.8 12 1.200" stroke-width="2"/><path d="M6.500 16c3.500-1 7-.6 10 1" stroke-width="1.700"/></g>`,
  steam: svg`<circle cx="12" cy="12" r="12" fill="#123a66"/><path d="M.5 14a12 12 0 0 0 22 4L14 22z" fill="#1b8ac5"/><path d="M1 13l7 4 8-8" stroke="#fff" stroke-width="3" fill="none"/><circle cx="16" cy="8.500" r="4.500" fill="#fff"/><circle cx="16" cy="8.500" r="2.800" fill="#123a66"/><circle cx="8.500" cy="16.500" r="3.500" fill="#fff"/><circle cx="8.500" cy="16.500" r="2" fill="#123a66"/>`,
  epic: svg`<path d="M2 0h20v20l-10 4-10-4z" fill="#050505"/><text x="4" y="11" font-size="10" font-weight="700" font-family="Liberation Sans" fill="#fff" textLength="16" lengthAdjust="spacingAndGlyphs">EPIC</text><text x="4" y="17" font-size="4.500" font-weight="700" font-family="Liberation Sans" fill="#fff" textLength="16">GAMES</text><path d="M9 20h6l-3 1.800z" fill="#fff"/>`,
  power: svg`<path d="M12 .8l9.700 5.600v11.200L12 23.200l-9.700-5.600V6.400z" fill="#111" stroke="#ddd" stroke-width="1.500"/><g fill="none" stroke-width="2.200"><path d="M5 14a7.500 7.500 0 0 1 3-8.500" stroke="#e33"/><path d="M8 5.500a7.500 7.500 0 0 1 9 .8" stroke="#fb3"/><path d="M17 6.300a7.500 7.500 0 0 1 1 10.500" stroke="#3c5"/><path d="M18 17a7.500 7.500 0 0 1-13-3" stroke="#49f"/></g><circle cx="12" cy="12" r="3.300" fill="none" stroke="#fff" stroke-width="1.600"/><path d="M12 7v5" stroke="#fff" stroke-width="2"/>`,
  chev: svg`<path d="M4 15l8-7 8 7" fill="none" stroke="#fff" stroke-width="2.400"/>`,
  mic: svg`<g fill="none" stroke="#e08a78" stroke-width="2"><rect x="8.500" y="1" width="7" height="13" rx="3.500"/><path d="M5 11a7 7 0 0 0 14 0M12 18v5"/></g>`,
  wifi: svg`<g fill="none" stroke="#fff" stroke-width="2"><path d="M1.500 9a15 15 0 0 1 21 0M5 13a10 10 0 0 1 14 0M8.500 16.500a5 5 0 0 1 7 0"/></g><circle cx="12" cy="20" r="1.800" fill="#fff"/>`,
  vol: svg`<path d="M1.500 9h4l5-5v16l-5-5h-4z" fill="none" stroke="#fff" stroke-width="1.800"/><path d="M14 8a6 6 0 0 1 0 8M17 5a10 10 0 0 1 0 14" fill="none" stroke="#fff" stroke-width="1.800"/><path d="M20.500 3a13 13 0 0 1 0 18" fill="none" stroke="#777" stroke-width="1.500"/>`,
  batt: svg`<rect x="2" y="8" width="18" height="11" rx="2" fill="none" stroke="#fff" stroke-width="2"/><rect x="8" y="10" width="10" height="7" fill="#fff"/><path d="M21.500 11v5" stroke="#fff" stroke-width="2.500"/><path d="M7 2L2 10h3l-1 6 6-8H7l2-6z" fill="#fff" stroke="#222" stroke-width=".8"/>`,
  bell: svg`<path d="M12 1.500c5 0 7 3.500 7 8v5l2.500 4.500h-19L5 14.500v-5c0-4.500 2-8 7-8z" fill="#f2937f"/><path d="M9 20.500h6a3 3 0 0 1-6 0z" fill="#f2937f"/>`,
};

const icon = (name: string, cls = "i24"): TemplateResult =>
  html`<svg class="ic ${cls}" viewBox="0 0 24 24">${ICONS[name]}</svg>`;
const tri = (dir = "down", cls = "") => html`<i class="tri ${dir} ${cls}"></i>`;

const base = css`
  * { box-sizing: border-box; }
  .ic { display: block; flex: none; overflow: visible; }
  .i24 { width: 24px; height: 24px; }
  .i20 { width: 20px; height: 20px; }
  .i18 { width: 18px; height: 18px; }
  .i16 { width: 16px; height: 16px; }
  .i14 { width: 14px; height: 14px; }
  .i12 { width: 12px; height: 12px; }
  .i28 { width: 29px; height: 29px; }
  .tri { display: block; width: 0; height: 0; flex: none; border: 5px solid transparent; }
  .down { border-top: 6px solid #555; border-bottom: 0; }
  .up { border-bottom: 6px solid #555; border-top: 0; }
  .right { border-left: 6px solid #555; border-right: 0; }
  .dim { opacity: .5; }
  .seg { font-family: "Open Sans", "Noto Sans", sans-serif; font-size: 14.500px; }
  .tah { font-family: "DejaVu Sans Condensed", "DejaVu Sans", sans-serif; font-size: 13px; }
  .chk { width: 17px; height: 17px; border: 1px solid #b5b5b5; background: #fff; flex: none; display: flex; align-items: center; justify-content: center; }
  .sb { width: 17px; flex: none; display: flex; flex-direction: column; background: #e4e4e4; border-left: 1px solid #bcbcbc; }
  .sb .cap { height: 16px; flex: none; display: flex; align-items: center; justify-content: center; background: #fbfbfb; }
  .sb .thumb { background: linear-gradient(90deg, #fff, #f1f1f1); border-top: 1px solid #bcbcbc; border-bottom: 1px solid #bcbcbc; }
  .spin { display: flex; height: 25px; border: 1px solid #b0b0b0; border-radius: 3px; background: #fff; flex: none; }
  .spin .v { flex: 1; display: flex; align-items: center; padding-left: 4px; }
  .spin .b { width: 17px; border-left: 1px solid #b8b8b8; display: flex; flex-direction: column; align-items: center; justify-content: center; gap: 4px; background: #fafafa; border-radius: 0 3px 3px 0; }
`;

const check = (on: boolean) =>
  html`<span class="chk">${on ? html`<svg class="ic i16" viewBox="0 0 16 16"><path d="M3.500 7l3.500 5.500L12.500 3" fill="none" stroke="#000" stroke-width="2.200"/></svg>` : ""}</span>`;
const spin = (v: string, cls = "") => html`<span class="spin tah ${cls}"><span class="v">${v}</span><span class="b">${tri("up")}${tri("down")}</span></span>`;

/* Text squeezed or stretched to a given advance width. */
@customElement("fit-text")
export class FitText extends LitElement {
  @property({ type: Number }) w = 0;
  static styles = css`
    :host { display: inline-block; white-space: pre; flex: none; }
    span { display: inline-block; transform-origin: 0 50%; }
  `;
  render() { return html`<span><slot></slot></span>`; }
  firstUpdated() {
    const s = this.renderRoot.querySelector("span")!;
    const n = s.getBoundingClientRect().width;
    if (n && this.w) {
      this.style.width = `${this.w}px`;
      s.style.transform = `scaleX(${this.w / n})`;
    }
  }
}
const T = (w: number, t: unknown, cls = "") => html`<fit-text class=${cls} w=${w}>${t}</fit-text>`;

/* ---------- map canvas ---------- */
const rough = (src: string, step: number, amp: number, close = true): string => {
  const p = src.trim().split(/\s+/).map((q) => q.split(",").map(Number));
  let seed = p.length * 97 + Math.round(p[0][0]);
  const rnd = () => ((seed = (seed * 16807 + 11) % 2147483647) / 2147483647) * 2 - 1;
  const out: string[] = [];
  const last = close ? p.length : p.length - 1;
  for (let i = 0; i < last; i++) {
    const [x1, y1] = p[i];
    const [x2, y2] = p[(i + 1) % p.length];
    const len = Math.hypot(x2 - x1, y2 - y1);
    const n = Math.max(1, Math.round(len / step));
    out.push(`${x1},${y1}`);
    for (let k = 1; k < n; k++) {
      const t = k / n;
      const d = rnd() * amp;
      out.push(`${(x1 + (x2 - x1) * t - ((y2 - y1) / len) * d).toFixed(1)},${(y1 + (y2 - y1) * t + ((x2 - x1) / len) * d).toFixed(1)}`);
    }
  }
  if (!close) out.push(p[p.length - 1].join(","));
  return "M" + out.join("L") + (close ? "Z" : "");
};
type Shape = [string, string];
const draw = (shapes: Shape[]) => shapes.map(([c, s]) => svg`<path class=${c} d=${rough(s, 9, 3.5)} />`);
const lines = (ls: string[]) => ls.map((s) => svg`<path class="ln" d=${rough(s, 7, 3, false)} />`);
const specks = (cx: number, cy: number, rx: number, ry: number, n: number) => {
  let s = Math.round(cx * 31 + cy * 17 + n);
  const r = () => (s = (s * 16807 + 7) % 2147483647) / 2147483647;
  return Array.from({ length: n }, () => {
    const a = r() * 6.283, d = Math.sqrt(r()), x = cx + Math.cos(a) * d * rx, y = cy + Math.sin(a) * d * ry;
    return svg`<path class="dot" d="M${x.toFixed(0)} ${y.toFixed(0)}l${(r() * 7 - 3).toFixed(0)} ${(r() * 7 + 1).toFixed(0)}" />`;
  });
};

const EAST: Shape[] = [
  ["p", "40,10 1580,10 1580,830 1545,815 1530,795 1480,788 1455,798 1455,830 1445,858 1405,860 1398,825 1430,790 1435,760 1415,745 1398,715 1418,685 1400,650 1385,640 1375,590 1350,570 1330,575 1315,545 1348,535 1305,525 1300,505 1265,512 1270,540 1258,560 1270,590 1310,583 1325,630 1320,690 1285,707 1245,680 1225,640 1205,625 1205,675 1225,700 1240,750 1270,790 1280,830 1300,870 1297,905 1287,912 1280,870 1265,850 1272,878 1245,885 1240,925 1205,925 1190,895 1170,880 1150,850 1118,822 1108,880 1090,825 1055,850 1045,940 1065,960 1062,995 1022,1025 1012,990 975,1020 957,1035 968,1070 965,1110 985,1150 1005,1135 1035,1155 1040,1137 1062,1137 1065,1190 1085,1190 1085,1235 1105,1240 1140,1195 1165,1220 1175,1270 1220,1290 1262,1300 1272,1360 1320,1340 1330,1308 1380,1305 1400,1330 1435,1315 1470,1335 1480,1355 1505,1343 1497,1380 1500,1440 1475,1435 1475,1495 1460,1455 1440,1450 1412,1475 1395,1448 1345,1430 1335,1410 1375,1380 1310,1405 1275,1395 1270,1450 1235,1415 1180,1405 1140,1345 1135,1310 1110,1285 1090,1280 1098,1320 1060,1293 1020,1290 1010,1320 975,1325 960,1355 958,1330 968,1310 963,1225 930,1200 900,1215 890,1240 882,1280 857,1280 857,1262 873,1250 857,1190 820,1190 780,1198 765,1180 735,1180 720,1160 695,1180 660,1168 662,1127 700,1138 722,1130 725,1105 745,1100 745,1060 710,1058 682,1035 680,970 700,980 708,958 725,970 728,915 745,890 765,900 770,880 755,870 755,835 725,830 700,842 675,820 690,860 690,890 668,895 655,757 690,775 780,768 825,725 850,730 857,690 850,645 828,640 820,600 812,635 793,630 785,605 750,605 748,668 740,668 728,580 715,520 712,555 695,550 692,515 715,505 768,472 775,515 810,520 860,548 868,590 885,560 905,560 922,535 930,560 975,575 990,535 992,570 1040,583 1130,575 1165,545 1155,485 1190,482 1205,505 1220,500 1213,455 1215,410 1195,390 1160,398 1130,390 1115,355 1080,345 1055,370 1035,320 1030,292 985,298 940,280 910,300 895,255 882,290 870,255 855,290 835,245 810,205 790,212 745,230 712,270 700,235 675,255 655,220 625,212 600,220 607,280 590,240 578,293 555,293 548,262 515,268 425,265 418,178 340,172 332,122 265,112 255,133 220,130 205,108 225,100 222,75 150,80 122,108 118,230 128,255 122,283 85,270 64,295 40,300"],
  ["r", "64,10 147,10 147,92 70,95 66,155 40,155 40,10"],
  ["g", "72,115 100,92 145,92 140,105 118,112 122,190 110,230 98,225 90,150 72,130"],
  ["g", "60,270 72,265 78,225 84,262 95,268 92,290 60,298"],
  ["r", "50,218 74,222 72,262 50,270"],
  ["p", "143,292 178,290 184,330 250,322 254,312 262,365 245,355 220,375 218,392 198,380 180,402 160,440 150,412 130,405 135,345"],
  ["p", "90,540 92,522 118,505 125,480 170,468 176,485 208,488 205,510 180,530 120,540"],
  ["p", "235,492 265,488 300,503 305,520 270,520 238,508"],
  ["w", "148,318 155,318 155,332 148,332"], ["w", "163,488 175,482 175,505 165,505"],
  ["w", "95,115 104,112 103,138 94,136"],
  ["r", "246,92 272,78 290,45 310,32 328,40 335,62 355,80 352,90 300,80 270,96 250,98"],
  ["r", "385,10 523,10 520,52 480,36 468,60 440,62 420,45 412,85 395,118 375,122 380,85 400,62"],
  ["r", "530,20 592,20 590,65 560,68 535,76"],
  ["r", "600,20 680,40 712,80 712,115 680,180 650,150 630,110 603,80"],
  ["w", "633,110 650,125 664,165 656,175 640,145"], ["w", "665,85 688,80 700,105 690,122 672,112"],
  ["w", "595,25 650,22 690,42 715,80 708,82 685,50 640,35"],
  ["w", "705,20 755,22 752,62 728,65 712,45"],
  ["r", "757,20 800,20 800,60 775,70 757,55"], ["w", "775,30 788,28 785,48 775,48"],
  ["r", "848,20 875,20 878,60 860,55"],
  ["w", "820,42 870,60 945,38 940,55 915,80 925,105 895,160 885,150 900,100 890,90 850,88 825,72"],
  ["r", "925,80 985,75 985,45 1010,35 1015,50 1000,75 990,140 1050,150 1060,120 1070,120 1065,170 1050,180 1080,200 1085,145 1110,138 1145,150 1150,170 1178,175 1170,200 1140,210 1140,235 1180,250 1185,195 1215,200 1240,205 1225,270 1225,288 1290,288 1325,310 1330,340 1285,320 1240,345 1170,350 1160,330 1200,290 1195,260 1160,280 1090,240 1075,210 1040,215 1000,195 930,200 920,150"],
  ["r", "858,215 880,218 905,192 930,215 930,235 870,240"],
  ["r", "977,222 1020,238 1060,245 1085,270 1105,295 1070,300 1060,270 1005,265 980,238"],
  ["r", "1225,375 1260,335 1305,345 1305,400 1295,450 1285,467 1270,455 1285,420 1250,405"],
  ["r", "1350,305 1375,350 1420,385 1410,395 1370,375 1352,345"],
  ["r", "1458,395 1500,410 1530,440 1568,448 1568,490 1530,465 1490,430 1465,415"],
  ["g", "1070,630 1100,625 1115,612 1145,630 1163,650 1163,690 1148,690 1145,662 1118,655 1098,668"],
  ["w", "740,118 762,115 765,150 750,165 742,150"], ["w", "835,175 862,175 862,192 836,194"],
  ["w", "550,212 572,208 568,245 550,245"], ["w", "1247,262 1275,242 1278,275 1250,276"],
  ["w", "1320,490 1345,452 1370,470 1370,500 1340,510"], ["w", "1450,455 1470,455 1470,470 1450,470"],
  ["w", "1200,535 1215,540 1212,572 1200,570"], ["w", "1228,535 1246,560 1240,580 1225,555"],
  ["w", "870,632 895,640 898,665 875,652"], ["w", "775,830 808,805 805,832 785,835 790,880 778,870"],
  ["w", "800,852 812,855 812,895 800,890"], ["w", "840,770 850,775 845,812 838,805"], ["w", "788,920 810,912 808,930 790,932"],
  ["w", "750,945 762,945 768,990 755,985"], ["w", "865,1085 876,1088 874,1112 865,1108"], ["w", "940,1068 955,1072 950,1095 938,1090"],
  ["w", "965,1165 972,1170 970,1190 964,1185"], ["w", "1120,1265 1142,1258 1138,1278 1122,1278"], ["w", "1530,740 1560,760 1562,780 1535,768"],
  ["w", "1240,825 1275,815 1285,860 1270,850 1245,858"], ["w", "1218,765 1245,795 1235,800 1220,785"],
  ["w", "1500,208 1512,215 1508,235 1500,230"], ["w", "1555,235 1568,240 1568,275 1556,270"],
  ["w", "1070,45 1080,48 1078,68 1068,65"], ["w", "1208,25 1222,30 1218,55 1210,52"], ["w", "1100,90 1114,95 1112,108 1102,108"],
  ["w", "1148,92 1160,98 1158,130 1146,125"], ["w", "1028,108 1040,112 1040,125 1028,125"], ["w", "955,190 975,195 970,210 955,208"],
  ["w", "1180,345 1205,310 1200,355 1185,362"], ["w", "1222,310 1240,318 1232,345 1222,340"],
  ["w", "1230,425 1250,435 1242,475 1230,465"], ["w", "1365,520 1382,530 1375,555 1365,540"],
  ["w", "1400,538 1418,540 1415,555 1402,555"], ["w", "420,142 427,145 426,160 420,158"], ["w", "540,142 545,144 544,158 539,156"],
  ["p", "1330,763 1358,760 1385,800 1388,822 1350,802"], ["p", "1350,828 1388,850 1380,900 1388,955 1375,955 1370,912 1347,905 1350,882 1368,888"],
  ["p", "450,130 480,122 488,165 465,180 458,196 446,170"],
  ["p", "131,1520 148,1495 155,1510 150,1538 132,1530"], ["g", "40,1545 70,1530 105,1540 80,1555 82,1580 40,1580"],
];
const EAST_LINES = [
  "892,1055 905,1100 935,1170 980,1210 1040,1240 1085,1275", "1140,1340 1175,1345 1210,1380 1250,1392 1310,1405 1380,1378 1430,1390 1470,1430 1512,1445",
  "1535,475 1500,550 1500,640 1510,660 1495,720 1435,770 1400,820", "1090,240 1130,290 1135,350 1150,372 1225,355 1285,325 1345,350 1370,400 1430,430 1490,430 1540,470 1570,490",
  "700,235 685,215 710,170 712,90", "750,70 800,72 850,85", "1260,350 1285,320 1320,345",
];
const SOUTH_EAST: Shape[] = [
  ["p", "413,1272 435,1263 480,1270 495,1285 520,1268 545,1278 555,1308 578,1302 550,1330 520,1320 490,1308 480,1290 430,1285"],
  ["p", "674,1285 676,1270 710,1265 708,1235 720,1235 735,1262 752,1265 745,1282 700,1278"],
  ["p", "830,1265 840,1265 845,1290 865,1290 880,1268 895,1285 902,1320 880,1330 868,1345 900,1355 930,1355 935,1342 950,1365 985,1385 1040,1380 1045,1400 985,1425 890,1400 885,1370 855,1360 840,1340 818,1318"],
  ["p", "718,1368 765,1365 770,1350 800,1355 797,1312 810,1330 845,1340 845,1360 800,1380 750,1378"],
  ["g", "897,1400 930,1395 935,1370 950,1358 960,1375 975,1390 965,1405 985,1420 960,1435 930,1437 925,1415"],
  ["w", "895,1375 908,1378 908,1392 895,1392"], ["w", "953,1398 968,1398 968,1412 953,1412"],
  ["p", "1060,1395 1110,1370 1135,1330 1118,1298 1160,1305 1222,1283 1225,1310 1240,1320 1240,1355 1190,1365 1100,1395"],
  ["w", "1140,1338 1165,1328 1240,1332 1235,1348 1160,1360 1145,1368"], ["w", "1120,1368 1133,1368 1133,1380 1120,1380"],
];
const SOUTH_EAST_LINES = ["490,1308 540,1300", "850,1325 895,1285", "1120,1310 1180,1300 1225,1330", "490,1290 545,1285"];
const SOUTH_WEST: Shape[] = [
  ["p", "30,180 205,180 205,300 165,310 160,350 165,370 135,375 115,388 97,385 95,405 85,382 65,385 55,402 50,360 30,350"],
  ["r", "120,215 140,180 630,180 630,230 615,250 610,290 580,292 595,320 520,335 510,390 485,368 440,390 415,430 412,470 440,490 440,465 450,500 485,500 485,515 440,530 400,522 400,485 380,462 330,450 312,430 310,480 275,515 250,485 235,500 255,520 250,532 225,535 215,490 210,415 240,405 260,410 268,390 300,400 345,385 360,420 375,370 370,345 280,360 240,370 222,345 215,290 185,335 200,300 160,290 135,290 140,265"],
  ["p", "240,195 365,190 380,290 420,295 420,335 380,320 355,310 355,270 310,262 270,265 268,225"],
  ["w", "148,240 160,222 175,250 165,268 150,262"], ["w", "280,200 310,205 300,232 285,222"], ["w", "90,270 104,270 104,292 92,292"], ["w", "113,312 128,310 128,335 115,332"],
  ["w", "252,240 275,245 268,285 255,278"], ["w", "470,225 485,220 490,240 470,240"], ["w", "520,195 565,205 550,232 525,225"], ["p", "555,215 590,200 570,232 556,230"],
  ["w", "225,435 240,438 238,485 225,480"], ["w", "375,372 390,375 388,392 376,390"], ["w", "300,296 308,298 306,315 300,313"],
  ["r", "258,590 268,560 280,585 295,640 340,630 350,605 378,620 375,635 345,645 345,675 385,690 380,735 355,740 360,700 320,685 310,665 280,650 275,610"],
  ["r", "480,745 530,700 565,678 565,690 540,715 540,745"],
  ["p", "140,745 175,738 185,718 205,710 215,725 250,735 250,750 140,750"], ["p", "262,708 295,702 300,715 312,745 282,745"], ["p", "335,728 370,715 408,718 408,750 335,750"],
  ["g", "1080,30 1130,30 1132,80 1135,125 1208,120 1210,150 1185,175 1175,230 1135,252 1105,258 1060,305 1035,285 1038,240 1010,250 985,225 990,205 1090,160"],
  ["g", "985,275 1005,265 1020,285 1050,290 1055,325 1040,355 1062,420 1035,402 1000,435 985,490 970,490 960,460 938,460 938,410 970,415 972,400 945,380 958,335 985,345 1000,320"],
  ["g", "922,480 940,475 950,495 935,560 948,600 930,620 915,658 908,655 912,605 920,580"],
  ["g", "1138,405 1165,382 1200,378 1230,330 1260,305 1290,260 1338,230 1360,270 1385,308 1418,310 1425,420 1412,460 1400,425 1390,470 1395,515 1418,520 1415,545 1375,568 1350,545 1320,548 1340,590 1345,640 1310,605 1280,590 1245,545 1240,525 1205,525 1203,450 1190,432 1165,450 1160,492 1148,488 1140,455"],
  ["w", "1385,405 1396,412 1396,438 1386,432"],
  ["g", "1425,310 1440,265 1450,262 1460,300 1440,345 1438,385 1428,375"],
  ["g", "1160,518 1185,525 1190,570 1172,635 1162,630 1172,560"], ["g", "1140,605 1155,610 1158,660 1150,690 1175,710 1175,750 1135,745 1132,690 1145,650"], ["g", "1100,750 1130,702 1132,750"],
  ["g", "1470,40 1490,20 1530,20 1530,75 1500,60 1515,110 1515,135 1490,120 1485,180 1475,232 1455,200 1460,120 1445,100 1445,70 1475,80"],
  ["p", "1412,135 1440,130 1455,95 1465,140 1452,195 1430,185 1413,172"],
];
const SOUTH_WEST_LINES = ["475,205 500,240 510,265 540,268 570,255 590,240", "1285,530 1320,548 1350,520 1390,530", "505,250 510,285 530,290"];
const COUNTY = "M800 406L1016 394.600 1131 386 1129 358.200 1252 346 1262.800 439.300 1266 440 1271.500 470.400 1282.700 567 1236.700 572.500 1240 588 1246.700 650.700 1254.500 713.600 1232.600 716 1232.600 724 1066.300 738.200 1062 734 1056 728.600 1048 730 1041.500 728 1032 727 1025 728 1016 734 1008 746 1004 757 999.800 776 982 774.500 966 775 952 779 946 774 943 768 940 775 937 768 934.600 777 924 781 911 788 908.500 780 877.700 781.700 875.600 750 800 750Z";

@customElement("map-canvas")
export class MapCanvas extends LitElement {
  static styles = css`
    :host { display: block; background: #fff; }
    svg { display: block; width: 1232px; height: 780px; }
    path { stroke: #232323; stroke-width: 1.300; vector-effect: non-scaling-stroke; stroke-linejoin: round; }
    .p { fill: #5a16ee; } .r { fill: #e62b4c; } .g { fill: #9ed522; } .w { fill: #fff; }
    .ln { fill: none; stroke-width: 1.700; }
    .dot { fill: none; stroke-width: 2.200; stroke-linecap: round; }
    .county { fill: #729b6f; }
    .track { fill: none; stroke: #e36a82; }
  `;
  render() {
    return html`<svg viewBox="418 207 1232 780">
      <g transform="translate(1000 200) scale(.41454 .35714)">
        ${draw(EAST)}${lines(EAST_LINES)}
        ${specks(900, 800, 60, 70, 22)}${specks(765, 1000, 35, 120, 32)}${specks(1400, 470, 60, 50, 40)}${specks(1430, 415, 60, 22, 30)}${specks(800, 560, 60, 40, 14)}
        ${specks(960, 680, 130, 50, 12)}${specks(1540, 590, 25, 110, 14)}${specks(780, 1140, 50, 20, 5)}${specks(1120, 690, 25, 40, 6)}${specks(1190, 1330, 30, 25, 6)}${specks(1000, 200, 50, 25, 8)}${specks(1250, 850, 30, 10, 4)}
        <path class="ln" d="M301 1495L303 1540" />
      </g>
      <g transform="translate(1240 340) scale(.33333 .42092)">${draw(SOUTH_EAST)}${lines(SOUTH_EAST_LINES)}</g>
      <path class="p" d="M1163 900l4-2 1-12 3-3 2 12 4-4 3 2-2 12 3 3-6 8-2 10-4-6-5 6-3-10 4-6z" />
      <path class="county" d=${COUNTY} />
      <path class="track" d="M1041 393L1037 400 1033 407 1031 412 1026 417M982 520L977 531 975 535 971 555 973 562 971 572 974 600 979 618 981 640 983 650 982 670 988 684 993 697 1003 708 1010 713 1031 715 1044 718 1056 719 1062 715M1056 719V729" />
      <g transform="translate(400 740) scale(.42092 .33333)">
        ${draw(SOUTH_WEST)}${lines(SOUTH_WEST_LINES)}
        ${specks(1340, 330, 40, 70, 30)}${specks(1310, 410, 70, 45, 45)}${specks(1230, 455, 40, 30, 16)}${specks(1175, 395, 25, 20, 10)}${specks(1340, 520, 60, 18, 18)}${specks(410, 370, 16, 14, 5)}${specks(1120, 225, 25, 10, 4)}${specks(1020, 320, 12, 20, 3)}${specks(590, 215, 25, 15, 6)}${specks(945, 410, 6, 35, 8)}
      </g>
    </svg>`;
  }
}

/* ---------- attribute table window ---------- */
@customElement("attribute-window")
export class AttributeWindow extends LitElement {
  static styles = [base, css`
    :host { display: flex; flex-direction: column; width: 326px; height: 382px; background: #efefef; border: 1px solid #a9a9a9; border-radius: 8px; overflow: hidden; box-shadow: 0 12px 38px rgba(0,0,0,.36); color: #222; }
    .title { height: 35px; flex: none; background: #f3f3f3; display: flex; justify-content: flex-end; align-items: center; gap: 44px; padding-right: 22px; color: #777; }
    .tools { height: 34px; flex: none; display: flex; align-items: center; justify-content: flex-end; gap: 8px; padding: 0 7px 2px 0; }
    .tools i { width: 1px; height: 12px; background: #ccc; }
    .tools .ic:nth-last-child(2) { margin-right: 2px; }
    .grid { height: 261px; flex: none; display: flex; border-top: 1px solid #bbb; border-bottom: 1px solid #bbb; background: #fff; overflow: hidden; }
    .cols { flex: 1; display: flex; flex-direction: column; overflow: hidden; }
    .row { display: grid; grid-template-columns: 226px 1fr; height: 37px; flex: none; border-bottom: 1px solid #c4c4c4; }
    .row:nth-child(odd) { background: #e8e7e3; }
    .row.head { height: 22px; background: #f6f6f6; }
    .row > * { display: flex; align-items: center; border-right: 1px solid #c4c4c4; padding-left: 3px; overflow: hidden; }
    .row > :last-child { border-right: 0; }
    .head > :first-child { justify-content: flex-end; padding-right: 17px; }
    .head > :last-child { padding-left: 31px; }
    .sb .t { height: 63px; }
    .hs { height: 17px; flex: none; display: grid; grid-template-columns: 250px 41px 17px 17px; background: #fafafa; border-bottom: 1px solid #bbb; }
    .hs > * { border-right: 1px solid #bbb; display: flex; align-items: center; justify-content: center; }
    .hs .e { background: #e2e2e2; }
    .fl { flex: 1; }
    .foot { flex: 1; display: flex; align-items: center; justify-content: flex-end; gap: 5px; padding-right: 3px; }
    .on { width: 27px; height: 27px; border: 1px solid #999; border-radius: 3px; background: #dcdcdc; display: flex; align-items: center; justify-content: center; }
  `];
  render() {
    return html`
      <div class="title">${icon("minus", "i14")}${icon("square", "i14")}${icon("xmark", "i14")}</div>
      <div class="tools">${icon("colDel", "i16")}${icon("editT", "i16")}${icon("abacus", "i16")}<i></i>${icon("cond", "i16")}<i></i>${icon("action", "i16")}${icon("dock", "i16")}</div>
      <div class="grid">
        <div class="cols seg">
          <div class="row head"><span>${T(53, "DEDESC")}</span><span>${T(64, "FCODESC")}</span></div>
          ${Array.from({ length: 7 }, () => html`<div class="row"><span></span><span>${T(41, "Single")}</span></div>`)}
        </div>
        <div class="sb"><span class="cap">${tri("up")}</span><span class="thumb t"></span><span class="fl"></span><span class="cap">${tri("down")}</span></div>
      </div>
      <div class="hs"><span></span><span class="e"></span><span>${tri("right")}</span><span></span></div>
      <div class="foot">${icon("formV", "i18")}<span class="on">${icon("table", "i18")}</span></div>`;
  }
}

/* ---------- field calculator dialog ---------- */
const HELP: [number, string][] = [
  [142, "Zwraca długość linii. Jeśli"], [129, "potrzebujesz długości"], [211, "obramowania poligonu, użyj funkcji"], [195, "$perimeter. Długość obliczona za"], [180, "pomocą tej funkcji jest zgodna"],
  [199, "zarówno z bieżącym ustawieniem"], [193, "elipsoidy danego projektu, jak i z"], [199, "ustawieniem jednostki odległości."], [166, "Np. jeśli dla projektu została"], [177, "ustawiona elipsoida, wówczas"],
  [148, "obliczona długość będzie"], [183, "elipsoidalna, a jeśli nie zostanie"], [160, "ustawiona żadna elipsoida,"], [204, "wówczas obliczona długość będzie"], [95, "planimetryczna."],
];
const TREE: [number, string, boolean?][] = [
  [69, "aggregate"], [76, "max_length"], [73, "min_length"], [70, "Geometria", true], [112, "hausdorff_dista…"], [42, "length"], [50, "$length"], [61, "length3D"], [73, "$perimeter"], [57, "sinuosity"], [98, "tapered_buffer"],
  [140, "Luźne dopasowywa…", true], [112, "hamming_dista…"], [46, "Tablice", true], [81, "array_length"],
];

@customElement("field-calculator")
export class FieldCalculator extends LitElement {
  static styles = [base, css`
    :host { display: flex; flex-direction: column; width: 712px; height: 698px; background: #f0f0f0; border: 1px solid #a6a6a6; border-radius: 9px; overflow: hidden; box-shadow: 0 26px 62px rgba(0,0,0,.44), 0 0 16px rgba(0,0,0,.16); color: #000; }
    .title { height: 37px; flex: none; display: flex; align-items: center; background: #f0f2f9; padding: 0 12px 2px 8px; gap: 5px; }
    .title .ic:last-child { margin-left: auto; }
    .body { padding: 14px 12px 0 12px; display: flex; flex-direction: column; flex: 1; }
    .line { display: flex; align-items: center; gap: 6px; }
    .only { height: 18px; color: #808080; }
    .only .chk { background: #f0f0f0; }
    .heads { display: grid; grid-template-columns: 476px 1fr; height: 17px; margin: 9px 0 4px 1px; font-weight: 700; }
    .heads .line { height: 17px; }
    .heads fit-text { margin-top: 3px; }
    .groups { display: grid; grid-template-columns: 467px 210px; gap: 9px; margin-left: 1px; height: 123px; }
    .box { border: 1px solid #d8d8d8; border-radius: 3px; background: #ececec; }
    .left { padding: 11px 4px 0 4px; display: grid; grid-template-columns: 157px 95px 110px 95px; grid-template-rows: 21px 31px 30px 28px; align-items: center; }
    .left .full { grid-column: 1 / -1; }
    .left .wide { grid-column: 2 / -1; }
    .input { height: 26px; border: 1px solid #adadad; border-radius: 3px; background: #fff; }
    .combo { height: 28px; border: 1px solid #adadad; border-radius: 3px; background: linear-gradient(#fff, #f1f1f1); display: flex; align-items: center; padding: 0 9px 0 5px; }
    .combo .tri { margin-left: auto; }
    .num { font-weight: 700; color: #555; margin-right: 3px; font-size: 12.500px; }
    .left .spin { height: 22px; }
    .left .off { background: #ececec; color: #888; }
    .left .off .tri, .left .spin .up { opacity: .55; }
    .pad { padding-left: 7px; }
    .upd { border: 1px solid #d8d8d8; padding: 50px 5px 0 4px; border-radius: 3px; background: #ececec; }
    .upd .combo { background: #f5f5f5; border-color: #c6c6c6; }
    .tabs { display: flex; height: 30px; margin-top: 7px; align-items: flex-end; border-bottom: 1px solid #b3b3b3; flex: none; }
    .tab { border: 1px solid #b3b3b3; border-bottom: 0; border-radius: 3px 3px 0 0; height: 27px; width: 106px; display: flex; align-items: center; justify-content: center; background: #e7e7e7; padding: 2px 4px 0 0; }
    .tab.on { width: 92px; height: 30px; background: #fcfcfc; border-right: 1px solid #b3b3b3; margin-bottom: -1px; padding: 2px 1px 0 0; }
    .main { display: grid; grid-template-columns: 193px 191px 241px; column-gap: 26px; padding: 12px 0 0 10px; height: 353px; flex: none; }
    .main > :last-child { margin: 0 12px 0 -12px; }
    .btns { display: flex; gap: 2px; }
    .btn { height: 27px; width: 28px; border: 1px solid #b0b0b0; border-radius: 3px; background: linear-gradient(#fff, #f2f2f2); display: flex; align-items: center; justify-content: center; flex: none; }
    .btn.d { border-color: #cfcfcf; color: #888; }
    .edit { height: 215px; margin-top: 7px; background: #fff; border: 1px solid #b5b5b5; font: 16.400px "Liberation Mono", monospace; padding: 1px 12px; color: #4271ae; }
    .edit b { font-weight: 400; color: #777; }
    .ops { display: flex; gap: 2px; margin-top: 5px; overflow: hidden; width: 192px; }
    .ops .btn { width: 17.500px; height: 26px; font-size: 12.500px; }
    .obj { display: flex; margin-top: 9px; align-items: center; height: 28px; }
    .obj .cb { width: 79px; height: 25px; margin: 0 7px 0 7px; border: 1.500px solid #4aa3ec; border-radius: 3px; background: linear-gradient(90deg, #fff 52px, #f3f3f3 52px); display: flex; align-items: center; justify-content: space-between; padding-right: 8px; }
    .obj .btn + .btn { margin-left: 7px; }
    .prev { display: flex; gap: 8px; margin-top: 8px; }
    .srch { display: flex; gap: 7px; height: 26px; }
    .field { width: 100px; border: 1px solid #b0b0b0; border-radius: 3px; background: #fff; display: flex; align-items: center; padding: 0 9px 0 9px; gap: 8px; }
    .field .ic:last-child { margin-left: auto; }
    .show { width: 84px; height: 26px; }
    .tree, .help { background: #fff; border: 1px solid #b5b5b5; display: flex; overflow: hidden; }
    .tree { height: 307px; margin-top: 7px; }
    .rows { flex: 1; overflow: hidden; }
    .tr { height: 20px; padding-left: 53px; display: flex; align-items: center; overflow: hidden; }
    .tr.cur { background: #f0f0f0; }
    .tr.grp { padding: 0; }
    .tr.grp .tri { margin: 0 7px 0 8px; }
    .tr.grp > span { flex: 1; height: 20px; background: #c0c0c0; padding-left: 3px; display: flex; align-items: center; }
    .help { height: 341px; }
    .doc { flex: 1; padding: 4px 3px 0 4px; overflow: hidden; display: flex; flex-direction: column; }
    .doc .ht { height: 24px; background: #f5f5f5; color: #93b023; font-weight: 700; font-size: 16px; display: flex; align-items: center; margin-bottom: 11px; flex: none; }
    .doc p { margin: 0; height: 19px; font-size: 13px; display: flex; align-items: center; flex: none; }
    .fl { flex: 1; }
    .tsb .a { height: 13px; } .tsb .b { height: 204px; } .hsb .b { height: 229px; }
    .acts { display: flex; justify-content: flex-end; gap: 7px; margin-top: 47px; }
    .acts .btn { width: 80px; height: 25px; }
  `];
  render() {
    return html`
      <div class="title seg">${icon("qgis", "i20")}${T(174, "Przycięte — Kalkulator pól")}${icon("xmark", "i16")}</div>
      <div class="body tah">
        <div class="line only">${check(false)}${T(191, "Only update 0 selected feature(s)")}</div>
        <div class="heads"><div class="line">${check(true)}${T(109, "Twórz nowe pole")}</div><div class="line">${check(false)}${T(161, "Aktualizuj istniejące pole")}</div></div>
        <div class="groups">
          <div class="box left">
            <div class="line full">${check(true)}${T(121, "Twórz pole wirtualne")}</div>
            <span>${T(38, "Nazwa")}</span><span class="input wide"></span>
            <span>${T(21, "Typ")}</span><span class="combo wide"><span class="num">${T(20, "123")}</span>${T(87, "Integer (32 bit)")}${tri()}</span>
            <span>${T(150, "Długość pola wyjściowego")}</span>${spin("10")}<span class="pad">${T(65, "Dokładność")}</span>${spin("3", "off")}
          </div>
          <div class="upd"><span class="combo">${tri("down", "dim")}</span></div>
        </div>
        <div class="tabs"><span class="tab on">${T(60, "Wyrażenie")}</span><span class="tab">${T(77, "Edytor funkcji")}</span></div>
        <div class="main">
          <div>
            <div class="btns">${["new", "save", "editG", "binG", "down", "up"].map((n) => html`<span class="btn ${n.endsWith("G") ? "d" : ""}">${icon(n, "i20")}</span>`)}</div>
            <div class="edit"><b>$</b>length</div>
            <div class="ops">${["=", "+", "-", "/", "*", "^", "||", "(", ")", "\\n'"].map((o) => html`<span class="btn">${o}</span>`)}</div>
            <div class="obj">${T(36, "Obiekt")}<span class="cb">${T(49, "erational")}${tri()}</span><span class="btn d">${icon("prev", "i20")}</span><span class="btn">${icon("next", "i20")}</span></div>
            <div class="prev">${T(49, "Podgląd:")}${T(123, "34883,242711107356")}</div>
          </div>
          <div>
            <div class="srch"><span class="field">${icon("search", "i16")}${T(24, "leng")}${icon("clear", "i18")}</span><span class="btn d show">${T(75, "Pokaż pomoc")}</span></div>
            <div class="tree seg">
              <div class="rows">${TREE.map(([w, t, g]) => g
                ? html`<div class="tr grp">${tri()}<span>${T(w, t)}</span></div>`
                : html`<div class=${classMap({ tr: true, cur: t === "$length" })}>${T(w, t)}</div>`)}
                <div class="tr grp"><i class="tri"></i><span></span></div></div>
              <div class="sb tsb"><span class="cap">${tri("up")}</span><span class="a"></span><span class="thumb b"></span><span class="fl"></span><span class="cap">${tri("down")}</span></div>
            </div>
          </div>
          <div class="help seg">
            <div class="doc"><div class="ht">${T(128, "Funkcja $length")}</div>${HELP.map(([w, t]) => html`<p>${T(w, t)}</p>`)}</div>
            <div class="sb hsb"><span class="cap">${tri("up")}</span><span class="thumb b"></span><span class="fl"></span><span class="cap">${tri("down")}</span></div>
          </div>
        </div>
        <div class="acts"><span class="btn d">${T(16, "OK")}</span><span class="btn">${T(36, "Anuluj")}</span><span class="btn">${T(38, "Pomoc")}</span></div>
      </div>`;
  }
}

/* ---------- main window ---------- */
const MENU: [number, string, string, string][] = [
  [46, "Pro", "j", "ekt"], [43, "", "E", "dycja"], [43, "", "W", "idok"], [57, "W", "a", "rstwa"], [72, "", "U", "stawienia"], [51, "", "W", "tyczki"], [47, "Wekt", "o", "r"], [41, "", "R", "aster"], [83, "", "B", "aza danych"],
  [83, "W ", "i", "nternecie"], [40, "Siatka", "", ""], [25, "SCP", "", ""], [70, "Pro", "c", "essing"], [46, "", "P", "omoc"],
];
const ROW1 = "| new open save newLayout layouts style | !hand panSel zoomIn zoomOut zoomFull zoomSel zoomLayer zoom1 zoomLast zoomNext mapView view3d bookNew book clock refresh | select v selForm v deselect v selLoc | info abacus !gear sigma table v ruler v tip gearGray v".split(" ");
const ROW2 = "| dsm gpkg shpNew featherNew chip meshNew virt | pencils pencil saveGray _ vtx _ vtx2 form _ barpen redbar cut copy paste undo redo | abcY pie : abcB abcR : lab1 lab2 lab3 lab4 lab5 | metaSearch | python | help | tabRef".split(" ");
const ALGS: [string, string, number][] = [
  ["clock", "Ostatnio używane", 117], ["qgis", "Database", 63], ["qgis", "GPS", 26], ["qgis", "Interpolacje", 79], ["qgis", "Kafle wektorowe", 111], ["qgis", "Kartografia", 75], ["qgis", "Plik - narzędzia", 101], ["qgis", "Raster - analiza", 102], ["qgis", "Raster - analiza terenu", 148],
];
const BROWSER: [string, string, number][] = [
  ["gpkg", "GeoPackage", 81], ["feather", "SpatiaLite", 66], ["pg", "PostgreSQL", 75], ["hana", "SAP HANA", 72], ["mssql", "MS SQL Server", 96], ["oracle", "Oracle", 43], ["wms", "WMS/WMTS", 84], ["vt", "Vector Tiles", 76], ["xyz", "XYZ Tiles", 60],
];
const APPS = ["tview", "teams", "edge", "folder", "mail", "msi", "nv", "m365", "chrome", "discord", "spotify", "steam", "epic", "power", "qgis"];
const RUNNING = new Set(["teams", "edge", "folder", "chrome", "discord"]);

@customElement("app-root")
export class AppRoot extends LitElement {
  static styles = [base, css`
    :host { display: block; position: relative; width: 1920px; height: 1080px; overflow: hidden; background: #f0f0f0; color: #000; }
    .win { display: flex; flex-direction: column; height: 1080px; }
    .title { height: 29px; flex: none; background: #f3f3f3; display: flex; align-items: center; padding: 0 24px 1px 2px; gap: 6px; color: #8a8a8a; }
    .wbtn { display: flex; gap: 44px; margin-left: auto; }
    .menu { height: 25px; flex: none; display: flex; gap: 14.850px; padding: 0 11px; align-items: center; color: #9b9b9b; border-bottom: 1px solid #d4d4d4; }
    .bar { height: 39px; flex: none; display: flex; align-items: center; background: linear-gradient(#fbfbfb, #eee); border-bottom: 1.500px solid #b9b9b9; }
    .cell { width: 33px; height: 31px; flex: none; display: flex; align-items: center; justify-content: center; }
    .cell.on { border: 1px solid #a8a8a8; border-radius: 3px; background: #dadada; width: 31px; margin: 0 1px; }
    .grip { width: 18px; height: 20px; flex: none; background: repeating-linear-gradient(#c2c2c2 0 1px, transparent 1px 3px) 10px 0 / 1.500px 18px no-repeat, repeating-linear-gradient(#c2c2c2 0 1px, transparent 1px 3px) 13px 0 / 1.500px 18px no-repeat; }
    .grip:first-child { width: 14.500px; background-position: 5px 0, 8px 0; }
    .dd { width: 15px; flex: none; display: flex; justify-content: center; }
    .vs { width: 9px; height: 24px; flex: none; background: linear-gradient(#ccc, #ccc) 4px 0 / 1px 24px no-repeat; }
    .gap { width: 9.300px; flex: none; }
    .rgb { width: 68px; height: 22px; background: #5c5c5c; color: #fff; display: flex; align-items: center; gap: 7px; padding-left: 2px; margin-right: 879px; flex: none; }
    .knob { width: 15px; height: 15px; border-radius: 50%; background: #999; border: 4px solid #444; }
    .s { width: 13px; height: 18px; background: #444; color: #fff; font: 700 15px "Liberation Serif", serif; display: flex; align-items: center; justify-content: center; flex: none; }
    .row3 .spin { width: 60px; margin: 0 1px 0 0; }
    .row3 .spin + .cell.go { margin: 0 0 0 1px; width: 32px; }
    .row3 .pix { margin-right: -1px; }
    .row3 .last { margin-left: 2px; }
    .work { height: 817px; flex: none; display: grid; grid-template-columns: 410px 7px 1234px 7px 262px; }
    .left, .rt { display: flex; flex-direction: column; min-width: 0; padding-top: 1px; }
    .dt { height: 20px; display: flex; align-items: center; padding: 0 4px; flex: none; gap: 2px; }
    .dt fit-text { margin-right: auto; }
    .dtools { height: 26px; flex: none; display: flex; align-items: center; gap: 9px; padding-left: 8px; margin-bottom: 3px; }
    .dtools > .tri { margin-left: -3px; }
    .layers { height: 467px; flex: none; background: #fff; border: 1px solid #b5b5b5; border-left-color: #999; }
    .lr { height: 22px; display: flex; align-items: center; gap: 6px; padding-left: 28px; }
    .lr.cur { background: #f0f0f0; }
    .lr.bold { font-weight: 700; }
    .lr.off { font-style: italic; color: #808080; }
    .lr.ind { padding-left: 53px; }
    .lr.open { padding-left: 8px; }
    .lr.open .tri { margin-right: 4px; }
    .sw { width: 19px; height: 19px; border: 1px solid #333; flex: none; }
    .ls { width: 19px; height: 2px; flex: none; }
    .c1 { background: #e8748c; } .c2 { background: #bfb391; } .c3 { background: #729b6f; } .c4 { background: #e5b636; } .c5 { background: #9ed522; } .c6 { background: #e62b4c; } .c7 { background: #5a16ee; } .c8 { background: #3ac8b0; }
    .dtabs { height: 40px; flex: none; display: flex; align-items: flex-start; }
    .dtab { height: 27px; width: 85px; border: 1px solid #b3b3b3; background: #e0e0e0; display: flex; align-items: center; justify-content: center; margin-top: 2px; border-radius: 0 0 3px 3px; }
    .dtab.on { height: 29px; background: #f8f8f8; border-top: 0; padding: 3px 9px 0 0; }
    .brw { height: 211px; flex: none; display: flex; background: #fff; border: 1px solid #b5b5b5; overflow: hidden; }
    .brows { flex: 1; overflow: hidden; padding-top: 1px; }
    .br { height: 22px; display: flex; align-items: center; gap: 6px; padding-left: 20px; }
    .br.x { padding-left: 4px; }
    .br.sub { padding-left: 38px; }
    .fl { flex: 1; }
    .bs .a { height: 34px; } .bs .b { height: 84px; }
    .bs .top { height: 20px; }
    .center { display: flex; flex-direction: column; border: 1px solid #b0b0b0; border-right-width: 1px; overflow: hidden; }
    .msg { height: 35px; flex: none; background: #dff0d8; border-bottom: 1px solid #8fa98b; display: flex; align-items: center; justify-content: space-between; padding: 0 24px 0 586px; color: #2b8a00; }
    .rs { height: 25px; flex: none; border: 1.500px solid #b0b0b0; border-radius: 3px; background: #fff; display: flex; align-items: center; gap: 8px; padding-left: 9px; color: #888; }
    .alg { height: 194px; flex: none; display: flex; border: 1px solid #b5b5b5; background: #fff; overflow: hidden; }
    .algs { flex: 1; overflow: hidden; padding-top: 1px; }
    .al { height: 22px; display: flex; align-items: center; padding-left: 10px; }
    .al .ic { margin: 0 7px 0 13px; }
    .as .b { height: 52px; }
    .hand { height: 8px; flex: none; }
    .panel { background: #fff; border: 1px solid #b5b5b5; flex: none; }
    .p1 { height: 256px; } .p2 { height: 257px; margin-top: 6px; }
    .on2 { width: 24px; height: 23px; border: 1px solid #a8a8a8; border-radius: 3px; background: #dadada; display: flex; align-items: center; justify-content: center; margin: 0 -4px; }
    .sepv { width: 1px; height: 14px; background: #ccc; margin: 0 -1px; }
    .status { height: 32px; flex: none; display: flex; align-items: center; border-bottom: 1px solid #444; padding-left: 4px; }
    .find { width: 231px; height: 26px; border: 1px solid #aaa; border-radius: 3px; background: #fff; display: flex; align-items: center; gap: 8px; padding-left: 9px; color: #888; margin-right: 9px; }
    .box { height: 26px; border: 1px solid #aaa; border-radius: 3px; background: #fff; display: flex; align-items: center; justify-content: center; }
    .xy { width: 113px; margin: 0 5px 0 4px; }
    .sc { width: 92px; margin: 0 11px 0 4px; justify-content: space-between; padding: 0 9px 0 3px; }
    .st1 { margin-right: 448px; }
    .ms { margin-left: 15px; }
    .m9 { margin-left: 9px; } .m10 { margin-left: 10px; }
    .status .spin.z { width: 92px; margin-left: 4px; }
    .status .spin.k { width: 89px; margin: 0 6px 0 8px; }
    .status .chk { width: 16px; margin-right: 7px; }
    .crs { margin-left: 17px; display: flex; align-items: center; gap: 3px; }
    .bub { margin-left: 26px; }
    .task { height: 60px; flex: none; background: #202020; color: #fff; display: flex; align-items: center; padding: 0 26px 0 24px; }
    .wx { display: flex; gap: 9px; align-items: center; width: 359px; }
    .wx .ic { width: 31px; height: 31px; }
    .two { display: flex; flex-direction: column; line-height: 20px; }
    .two > :last-child { color: #d5d5d5; }
    .pill { width: 273px; height: 38px; border-radius: 19px; background: #f3f3f3; color: #666; display: flex; align-items: center; gap: 13px; padding-left: 14px; margin: 0 3px 0 18px; font-size: 16.500px; }
    .app { width: 55px; height: 56px; display: flex; align-items: center; justify-content: center; position: relative; flex: none; }
    .app.run::after { content: ""; position: absolute; bottom: 3px; width: 8px; height: 4px; border-radius: 2px; background: #9a9a9a; }
    .app.act { background: #323232; border-radius: 6px; width: 46px; height: 50px; margin-left: 4px; border: 1px solid #404040; }
    .app.act::after { content: ""; position: absolute; bottom: 0; width: 20px; height: 4px; border-radius: 2px; background: #f9655b; }
    .bdg { position: absolute; right: 7px; top: 7px; width: 20px; height: 20px; border-radius: 50%; background: #13a10e; display: flex; align-items: center; justify-content: center; }
    .bdg.rd { background: #e0504c; font-size: 11px; right: 7px; width: 18px; height: 18px; }
    .tray { margin-left: auto; display: flex; align-items: center; }
    .t1 { margin-right: 24px; } .t2 { margin-right: 20px; } .t3 { margin-right: 10px; } .t5 { margin-right: 19px; }
    .clk { align-items: flex-end; margin-right: 10px; }
    .clk > :last-child { color: #fff; }
    .w2 { position: absolute; left: 700px; top: 138px; }
    .dlg { position: absolute; left: 148px; top: 110px; }
  `];

  private tool(t: string) {
    if (t === "|") return html`<i class="grip"></i>`;
    if (t === "v") return html`<span class="dd">${tri()}</span>`;
    if (t === "_") return html`<i class="gap"></i>`;
    if (t === ":") return html`<i class="vs"></i>`;
    return t.startsWith("!") ? html`<span class="cell on">${icon(t.slice(1))}</span>` : html`<span class="cell">${icon(t)}</span>`;
  }

  render() {
    return html`
      <div class="win">
        <div class="title seg">${icon("qgis", "i20")}${T(181, "*Projekt bez nazwy — QGIS")}<span class="wbtn">${icon("minus", "i14")}${icon("restore", "i14")}${icon("xmark", "i14")}</span></div>
        <div class="menu seg">${MENU.map(([w, a, u, b]) => T(w, html`${a}<u>${u}</u>${b}`))}</div>
        <div class="bar">${ROW1.map((t) => this.tool(t))}</div>
        <div class="bar row2">${ROW2.map((t) => this.tool(t))}</div>
        <div class="bar row3 tah">
          <i class="grip"></i><span class="cell">${icon("scp1")}</span><span class="cell">${icon("scp2")}</span>
          <span class="rgb"><i class="knob"></i>${T(36, "RGB =")}</span>
          <span class="s">S</span>${spin("200")}<span class="cell">${icon("trash")}</span><span class="cell">${icon("kml")}</span>
          <i class="grip"></i><span class="cell pix">${icon("pix")}</span>${["0", "1", "2"].map((n) => html`${spin(n)}<span class="cell go">${icon("go")}</span>`)}<span class="cell last">${icon("undoPix")}</span>
        </div>
        <div class="work">
          <div class="left">
            <div class="dt seg">${T(55, "Warstwy")}</div>
            <div class="dtools">${["brush", "group", "eye", "funnelM", "eps"].map((n) => icon(n, "i16"))}${tri()}</div>
            <div class="layers seg">
              <div class="lr bold cur">${check(true)}<i class="ls c1"></i>${T(63, html`<u>Przycięte</u>`)}</div>
              <div class="lr bold off">${check(false)}<i class="ls c2"></i>${T(64, "railroads")}</div>
              <div class="lr bold">${check(true)}<i class="sw c3"></i>${T(75, "matanuska")}</div>
              <div class="lr bold off">${check(false)}<i class="sw c4"></i>${T(34, "trees")}</div>
              <div class="lr bold open">${tri()}${check(true)}${icon("poly", "i20")}${T(35, "trees")}</div>
              <div class="lr ind">${check(true)}<i class="sw c5"></i>${T(69, "Deciduous")}</div>
              <div class="lr ind">${check(true)}<i class="sw c6"></i>${T(67, "Evergreen")}</div>
              <div class="lr ind">${check(true)}<i class="sw c7"></i>${T(78, "Mixed Trees")}</div>
              <div class="lr ind">${check(true)}<i class="sw c8"></i></div>
            </div>
            <div class="dtabs tah"><span class="dtab">${T(54, html`SCP <u>D</u>ock`)}</span><span class="dtab on">${T(50, "Warstwy")}</span></div>
            <div class="dt seg">${T(85, "Przeglądarka")}</div>
            <div class="dtools">${["addSel", "refresh", "funnel", "collUp", "infoB"].map((n) => icon(n, "i16"))}</div>
            <div class="brw seg">
              <div class="brows">
                ${BROWSER.map(([i, t, w]) => html`<div class=${classMap({ br: true, x: i === "xyz" })}>${i === "xyz" ? tri() : ""}${icon(i, "i20")}${T(w, t)}</div>`)}
                <div class="br sub">${icon("xyz", "i20")}${T(149, "Mapzen Global Terrain")}</div>
              </div>
              <div class="sb bs"><span class="top"></span><span class="a"></span><span class="thumb b"></span><span class="fl"></span><span class="cap">${tri()}</span></div>
            </div>
          </div>
          <span></span>
          <div class="center">
            <div class="msg tah">${T(86, html`<u>matanuska.shp</u>`)}${icon("closeMsg", "i20")}</div>
            <map-canvas></map-canvas>
          </div>
          <span></span>
          <div class="rt">
            <div class="dt seg">${T(150, "Algorytmy Processingu")}${icon("float", "i12")}${icon("closeD", "i12")}</div>
            <div class="dtools">${icon("tools", "i16")}${icon("pyM", "i16")}${icon("clock", "i16")}<span class="on2">${icon("doc", "i18")}</span><i class="sepv"></i>${icon("note", "i16")}<i class="sepv"></i>${icon("wrench", "i16")}</div>
            <div class="rs tah">${icon("search", "i16")}${T(48, "Szukaj…")}</div>
            <div class="alg seg">
              <div class="algs">${ALGS.map(([i, t, w]) => html`<div class="al">${tri("right")}${icon(i, "i18")}${T(w, t)}</div>`)}</div>
              <div class="sb as"><span class="cap">${tri("up")}</span><span class="thumb b"></span><span class="fl"></span><span class="cap">${tri()}</span></div>
            </div>
            <div class="hand"></div>
            <div class="dt seg">${T(116, "Podgląd wyników")}${icon("float", "i12")}${icon("closeD", "i12")}</div>
            <div class="panel p1"></div>
            <div class="panel p2"></div>
          </div>
        </div>
        <div class="status tah">
          <span class="find">${icon("search", "i16")}${T(130, "Szukana fraza (Ctrl+K)")}</span>
          ${T(263, "Włącza/wyłącza tryb edycji aktywnej warstwy", "st1")}
          ${T(75, "Współrzędne")}<span class="box xy">${T(100, "-452678 5177831")}</span>${icon("extents", "i18")}
          ${T(30, "Skala", "ms")}<span class="box sc">${T(61, "1:2899344")}${tri()}</span>${icon("lock", "i18")}
          ${T(75, "Powiększenie", "m9")}${spin("100%", "z")}${T(59, "Kąt obrotu", "m10")}${spin("0,0 °", "k")}
          ${check(true)}${T(52, "Renderuj")}<span class="crs">${icon("crs", "i18")}${T(62, "EPSG:2964")}</span><span class="bub">${icon("bubble", "i20")}</span>
        </div>
        <div class="task seg">
          <div class="wx">${icon("cloud", "")}<span class="two">${T(23, "3°C")}${T(34, "Mgła")}</span></div>
          ${icon("win", "i28")}
          <div class="pill"><svg class="ic i18" viewBox="0 0 24 24"><circle cx="11" cy="10" r="8.500" fill="none" stroke="#222" stroke-width="2.400"/><path d="M16.500 17l5 6" stroke="#222" stroke-width="3"/></svg>${T(72, "Wyszukaj")}</div>
          ${APPS.map((a) => html`<span class=${classMap({ app: true, run: RUNNING.has(a), act: a === "qgis" })}>${icon(a, "i28")}
            ${a === "teams" ? html`<i class="bdg"><svg class="ic i12" viewBox="0 0 12 12"><path d="M2.500 6l2.500 3 4.500-6" fill="none" stroke="#fff" stroke-width="1.800"/></svg></i>` : ""}
            ${a === "discord" ? html`<span class="bdg rd">9+</span>` : ""}</span>`)}
          <div class="tray">${icon("chev", "i16 t1")}<span class="t2">${icon("mic", "i20")}</span><span class="t3">${icon("wifi", "i20")}</span><span class="t3">${icon("vol", "i20")}</span><span class="t5">${icon("batt", "i20")}</span>
            <span class="two clk">${T(36, "20:47")}${T(73, "01.12.2024")}</span>${icon("bell", "i18")}</div>
        </div>
      </div>
      <attribute-window class="w2"></attribute-window>
      <field-calculator class="dlg"></field-calculator>`;
  }
}
